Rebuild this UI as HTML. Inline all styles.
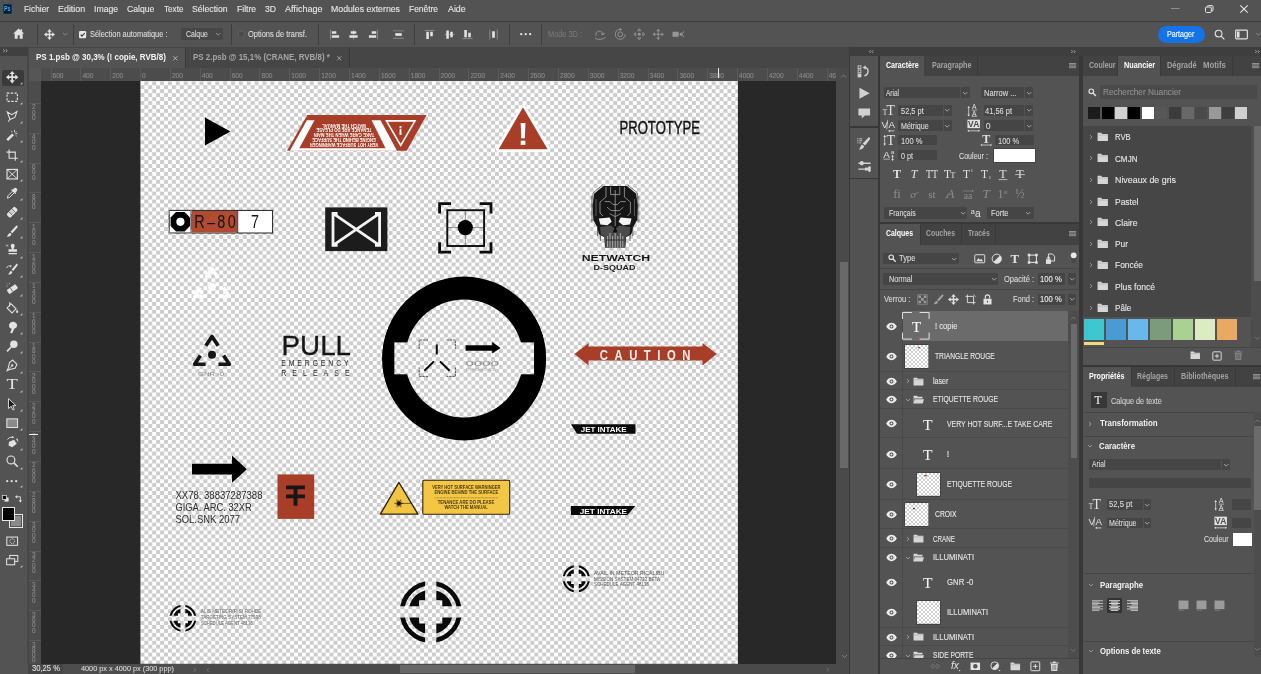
<!DOCTYPE html>
<html lang="fr"><head><meta charset="utf-8"><title>Photoshop</title><style>
html,body{margin:0;padding:0;}
body{width:1261px;height:674px;overflow:hidden;background:#535353;position:relative;will-change:transform;font-family:"Liberation Sans",sans-serif;color:#ddd;}
.panel,.b,.t,.i{position:absolute;}
.panel{overflow:hidden;}
.t{white-space:nowrap;line-height:1;transform-origin:0 0;-webkit-text-stroke:0.1px currentColor;}
svg{display:block;overflow:visible;}
</style></head><body>
<div id="menubar" class="panel" style="left:0px;top:0px;width:1261px;height:21px;background:#535353;">
<div class="b" style="left:2.5px;top:4.3px;width:9.8px;height:9.3px;background:#001e36;border-radius:2px;box-shadow:inset 0 0 0 0.6px #0d4a78;"></div>
<span class="t" style="left:4.2px;top:5.97px;font-size:6.6px;color:#3fb0ff;font-weight:bold;-webkit-text-stroke:0;transform:scaleX(0.8170);">Ps</span>
<span class="t" style="left:23.6px;top:5.49px;font-size:9.2px;color:#e8e8e8;transform:scaleX(0.9101);">Fichier</span>
<span class="t" style="left:57.6px;top:5.49px;font-size:9.2px;color:#e8e8e8;transform:scaleX(0.9682);">Edition</span>
<span class="t" style="left:93.9px;top:5.49px;font-size:9.2px;color:#e8e8e8;transform:scaleX(0.9434);">Image</span>
<span class="t" style="left:127px;top:5.49px;font-size:9.2px;color:#e8e8e8;transform:scaleX(0.9373);">Calque</span>
<span class="t" style="left:163.7px;top:5.49px;font-size:9.2px;color:#e8e8e8;transform:scaleX(0.8876);">Texte</span>
<span class="t" style="left:192px;top:5.49px;font-size:9.2px;color:#e8e8e8;transform:scaleX(0.9445);">Sélection</span>
<span class="t" style="left:236.5px;top:5.49px;font-size:9.2px;color:#e8e8e8;transform:scaleX(0.9353);">Filtre</span>
<span class="t" style="left:264.5px;top:5.49px;font-size:9.2px;color:#e8e8e8;transform:scaleX(0.9447);">3D</span>
<span class="t" style="left:284.5px;top:5.49px;font-size:9.2px;color:#e8e8e8;transform:scaleX(0.9832);">Affichage</span>
<span class="t" style="left:330.8px;top:5.49px;font-size:9.2px;color:#e8e8e8;transform:scaleX(0.9513);">Modules externes</span>
<span class="t" style="left:409px;top:5.49px;font-size:9.2px;color:#e8e8e8;transform:scaleX(0.9156);">Fenêtre</span>
<span class="t" style="left:447.6px;top:5.49px;font-size:9.2px;color:#e8e8e8;transform:scaleX(0.9624);">Aide</span>
<svg class="i" style="left:1171px;top:7.5px;" width="8.5" height="1" viewBox="0 0 8.5 1"><rect width="8.5" height="1" fill="#8e8e8e"/></svg>
<svg class="i" style="left:1204.5px;top:4.5px;" width="8.5" height="8" viewBox="0 0 8.5 8"><rect x="0.5" y="2" width="5.8" height="5.5" rx="1" fill="none" stroke="#e6e6e6" stroke-width="1"/><path d="M2.3 2V1.6a1 1 0 0 1 1-1H7a1 1 0 0 1 1 1V5a1 1 0 0 1-1 1H6.4" fill="none" stroke="#e6e6e6" stroke-width="1"/></svg>
<svg class="i" style="left:1240px;top:4.5px;" width="8" height="8" viewBox="0 0 8 8"><path d="M0.3 0.3L7.7 7.7M7.7 0.3L0.3 7.7" stroke="#e6e6e6" stroke-width="1.1"/></svg>
</div>
<div class="b" style="left:0px;top:20.8px;width:1261px;height:1.2px;background:#3c3c3c;"></div>
<div id="optionsbar" class="panel" style="left:0px;top:22px;width:1261px;height:24.5px;background:#535353;">
<svg class="i" style="left:12.7px;top:6.3px;" width="11.4" height="11.4" viewBox="0 0 12 12"><path d="M6 0.6L0.2 5.9H1.8V11.2H4.9V7.6H7.1V11.2H10.2V5.9H11.8L9.6 3.9V1.4H8.2V2.6Z" fill="#e2e2e2" /></svg>
<div class="b" style="left:37px;top:2px;width:0.8px;height:21px;background:#3e3e3e;"></div>
<svg class="i" style="left:43.5px;top:6.5px;" width="11" height="11" viewBox="0 0 12 12"><path d="M6 0L8.5 3H6.8V5.2H9V3.5L12 6L9 8.5V6.8H6.8V9H8.5L6 12L3.5 9H5.2V6.8H3V8.5L0 6L3 3.5V5.2H5.2V3H3.5Z" fill="#e2e2e2" /></svg>
<svg class="i" style="left:62.8px;top:11.2px;" width="4.4" height="2.2" viewBox="0 0 4.4 2.2"><path d="M0 0 L2.2 2.2 L4.4 0" fill="none" stroke="#888" stroke-width="0.9"/></svg>
<div class="b" style="left:72.8px;top:2px;width:0.8px;height:21px;background:#3e3e3e;"></div>
<svg class="i" style="left:79px;top:8.7px;" width="7.2" height="7.2" viewBox="0 0 7.2 7.2"><rect width="7.2" height="7.2" rx="1.2" fill="#e8e8e8"/><path d="M1.6 3.7L3 5.2L5.7 2" fill="none" stroke="#333" stroke-width="1.1"/></svg>
<span class="t" style="left:90px;top:8.09px;font-size:8.6px;color:#dcdcdc;transform:scaleX(0.8628);">Sélection automatique :</span>
<div class="b" style="left:180.7px;top:6.4px;width:42.3px;height:11.6px;background:#474747;border-radius:1px;"></div>
<span class="t" style="left:185.8px;top:8.09px;font-size:8.6px;color:#dcdcdc;transform:scaleX(0.8005);">Calque</span>
<svg class="i" style="left:215.8px;top:11.4px;" width="4.4" height="2.2" viewBox="0 0 4.4 2.2"><path d="M0 0 L2.2 2.2 L4.4 0" fill="none" stroke="#999" stroke-width="0.9"/></svg>
<div class="b" style="left:231px;top:2px;width:0.8px;height:21px;background:#3e3e3e;"></div>
<svg class="i" style="left:238px;top:9px;" width="6.4" height="6.4" viewBox="0 0 6.4 6.4"><rect x="0.3" y="0.3" width="5.8" height="5.8" rx="1" fill="#4a4a4a" stroke="#6a6a6a" stroke-width="0.6"/></svg>
<span class="t" style="left:248px;top:8.09px;font-size:8.6px;color:#dcdcdc;transform:scaleX(0.8696);">Options de transf.</span>
<div class="b" style="left:317.5px;top:2px;width:0.8px;height:21px;background:#3e3e3e;"></div>
<svg class="i" style="left:329px;top:6.5px;" width="11" height="11" viewBox="0 0 12 12"><path d="M1 0.5H2V11.5H1Z" fill="#8c8c8c" /><path d="M3 2.5H8V5.3H3Z M3 6.8H11V9.6H3Z" fill="#e2e2e2" /></svg>
<svg class="i" style="left:347.8px;top:6.5px;" width="11" height="11" viewBox="0 0 12 12"><path d="M5.5 0.5H6.5V11.5H5.5Z" fill="#8c8c8c" /><path d="M3 2.5H9V5.3H3Z M1.5 6.8H10.5V9.6H1.5Z" fill="#e2e2e2" /></svg>
<svg class="i" style="left:367.5px;top:6.5px;" width="11" height="11" viewBox="0 0 12 12"><path d="M10 0.5H11V11.5H10Z" fill="#8c8c8c" /><path d="M4 2.5H9V5.3H4Z M1 6.8H9V9.6H1Z" fill="#e2e2e2" /></svg>
<svg class="i" style="left:392.5px;top:6.5px;" width="11" height="11" viewBox="0 0 12 12"><path d="M0 1.5H12V2.5H0Z M0 9.5H12V10.5H0Z" fill="#8c8c8c" /><path d="M2.5 4.5H9.5V7.5H2.5Z" fill="#e2e2e2" /></svg>
<div class="b" style="left:414px;top:2px;width:0.8px;height:21px;background:#3e3e3e;"></div>
<svg class="i" style="left:424px;top:6.5px;" width="11" height="11" viewBox="0 0 12 12"><path d="M0.5 1H11.5V2H0.5Z" fill="#8c8c8c" /><path d="M2.5 3H5.3V11H2.5Z M6.8 3H9.6V8H6.8Z" fill="#e2e2e2" /></svg>
<svg class="i" style="left:443.5px;top:6.5px;" width="11" height="11" viewBox="0 0 12 12"><path d="M0.5 5.5H11.5V6.5H0.5Z" fill="#8c8c8c" /><path d="M2.5 1.5H5.3V10.5H2.5Z M6.8 3H9.6V9H6.8Z" fill="#e2e2e2" /></svg>
<svg class="i" style="left:462.2px;top:6.5px;" width="11" height="11" viewBox="0 0 12 12"><path d="M0.5 10H11.5V11H0.5Z" fill="#8c8c8c" /><path d="M2.5 1H5.3V9H2.5Z M6.8 4H9.6V9H6.8Z" fill="#e2e2e2" /></svg>
<svg class="i" style="left:488px;top:6.5px;" width="11" height="11" viewBox="0 0 12 12"><path d="M1.5 0.5H2.5V11.5H1.5Z M9.5 0.5H10.5V11.5H9.5Z" fill="#8c8c8c" /><path d="M4.5 2.5H7.5V9.5H4.5Z" fill="#e2e2e2" /></svg>
<div class="b" style="left:509px;top:2px;width:0.8px;height:21px;background:#3e3e3e;"></div>
<svg class="i" style="left:519.6px;top:11px;" width="11.4" height="2.4" viewBox="0 0 11.4 2.4"><circle cx="1.2" cy="1.2" r="1.15" fill="#e6e6e6"/><circle cx="5.7" cy="1.2" r="1.15" fill="#e6e6e6"/><circle cx="10.2" cy="1.2" r="1.15" fill="#e6e6e6"/></svg>
<div class="b" style="left:541px;top:2px;width:0.8px;height:21px;background:#3e3e3e;"></div>
<span class="t" style="left:548px;top:8.09px;font-size:8.6px;color:#787878;transform:scaleX(0.8574);">Mode 3D :</span>
<svg class="i" style="left:594.45px;top:5.75px;" width="12.5" height="12.5" viewBox="0 0 12 12"><path d="M2 7.5A3.4 3.4 0 1 1 8.6 6.4M8.6 6.4L10.4 4.8M8.6 6.4L6.6 5.6" fill="none" stroke="#979797" stroke-width="0.9" /><path d="M1 9.5C3 11.5 9 11.5 11 8.5" fill="none" stroke="#979797" stroke-width="0.9" /></svg>
<svg class="i" style="left:614.25px;top:5.75px;" width="12.5" height="12.5" viewBox="0 0 12 12"><path d="M6 1.2A4.8 4.8 0 1 0 10.8 6" fill="none" stroke="#979797" stroke-width="0.9" /><circle cx="6" cy="6" r="2.3" fill="none" stroke="#979797" stroke-width="0.9"/><path d="M5.6 0L8 1.3L5.6 2.6Z" fill="#979797" /></svg>
<svg class="i" style="left:633.45px;top:5.75px;" width="12.5" height="12.5" viewBox="0 0 12 12"><path d="M6 0.6L7.6 2.6H4.4ZM6 11.4L4.4 9.4H7.6ZM0.6 6L2.6 4.4V7.6ZM11.4 6L9.4 7.6V4.4Z" fill="none" stroke="#979797" stroke-width="0.8" /><circle cx="6" cy="6" r="1.4" fill="#979797"/></svg>
<svg class="i" style="left:652.25px;top:5.75px;" width="12.5" height="12.5" viewBox="0 0 12 12"><path d="M6 0.6L7.8 3H4.2ZM6 11.4L4.2 9H7.8ZM0.6 6L3 4.2V7.8ZM11.4 6L9 7.8V4.2Z" fill="#979797" /><path d="M5.2 5.2H6.8V6.8H5.2Z" fill="#979797" /><path d="M3 6H9M6 3V9" fill="none" stroke="#979797" stroke-width="0.7" /></svg>
<svg class="i" style="left:671.75px;top:5.75px;" width="12.5" height="12.5" viewBox="0 0 12 12"><path d="M0.5 3.6H6.4V8.4H0.5Z" fill="#979797" /><path d="M6.8 6L9.4 3.8V8.2Z" fill="#979797" /><path d="M11.4 3L9.8 6L11.4 9" fill="none" stroke="#979797" stroke-width="0.8" /></svg>
<div class="b" style="left:1157.7px;top:3.5px;width:47.6px;height:17.3px;background:#1473e6;border-radius:9px;"></div>
<span class="t" style="left:1166.6px;top:7.99px;font-size:8.6px;color:#fff;transform:scaleX(0.8311);">Partager</span>
<svg class="i" style="left:1214.2px;top:7.2px;" width="11" height="11" viewBox="0 0 12 12"><circle cx="5" cy="5" r="3.7" fill="none" stroke="#e2e2e2" stroke-width="1.2"/><path d="M7.8 7.8L11.3 11.3" fill="none" stroke="#e2e2e2" stroke-width="1.4" /></svg>
<svg class="i" style="left:1235.2px;top:6.2px;" width="13" height="13" viewBox="0 0 12 12"><rect x="0.6" y="2" width="10.8" height="8" rx="0.8" fill="none" stroke="#e2e2e2" stroke-width="1.1"/><path d="M1.8 3.2H4.2V8.8H1.8Z" fill="#e2e2e2" /></svg>
<svg class="i" style="left:1255.6px;top:11.4px;" width="4.4" height="2.2" viewBox="0 0 4.4 2.2"><path d="M0 0 L2.2 2.2 L4.4 0" fill="none" stroke="#888" stroke-width="0.9"/></svg>
</div>
<div id="doctabs" class="panel" style="left:0px;top:46.5px;width:850px;height:21.5px;background:#464646;">
<div class="b" style="left:0px;top:0px;width:28px;height:9.4px;background:#404040;"></div>
<div class="b" style="left:0px;top:9.4px;width:28px;height:12.1px;background:#535353;"></div>
<div class="b" style="left:26.8px;top:9.4px;width:2.4px;height:12.1px;background:#474747;"></div>
<svg class="i" style="left:2.6px;top:2.7px;" width="5" height="3.4" viewBox="0 0 5 3.4"><path d="M0.3 0.3L1.8 1.7L0.3 3.1M2.8 0.3L4.3 1.7L2.8 3.1" fill="none" stroke="#ccc" stroke-width="0.7"/></svg>
<div class="b" style="left:29px;top:1.1px;width:155.8px;height:20.4px;background:#535353;"></div>
<span class="t" style="left:36.3px;top:6.74px;font-size:8.9px;color:#f4f4f4;font-weight:bold;-webkit-text-stroke:0;transform:scaleX(0.9013);">PS 1.psb @ 30,3% (! copie, RVB/8)</span>
<svg class="i" style="left:172.7px;top:9.3px;" width="4.6" height="4.6" viewBox="0 0 4.6 4.6"><path d="M0.3 0.3L4.3 4.3M4.3 0.3L0.3 4.3" stroke="#c8c8c8" stroke-width="0.8"/></svg>
<div class="b" style="left:184.8px;top:0.5px;width:0.8px;height:21px;background:#383838;"></div>
<span class="t" style="left:193.4px;top:6.74px;font-size:8.9px;color:#a6a6a6;font-weight:bold;-webkit-text-stroke:0;transform:scaleX(0.8948);">PS 2.psb @ 15,1% (CRANE, RVB/8) *</span>
<svg class="i" style="left:336.8px;top:9.3px;" width="4.6" height="4.6" viewBox="0 0 4.6 4.6"><path d="M0.3 0.3L4.3 4.3M4.3 0.3L0.3 4.3" stroke="#bdbdbd" stroke-width="0.8"/></svg>
<div class="b" style="left:349.3px;top:0.5px;width:0.8px;height:21px;background:#383838;"></div>
</div>
<div id="toolbar" class="panel" style="left:0px;top:68px;width:29.2px;height:596px;background:#535353;">
<div class="b" style="left:26.8px;top:0px;width:2.4px;height:596px;background:#474747;"></div>
<div class="b" style="left:2px;top:1.5px;width:21.7px;height:16.2px;background:#3a3a3a;border-radius:2px;"></div>
<svg class="i" style="left:5.9px;top:2.6px;" width="12.4" height="12.4" viewBox="0 0 12 12"><path d="M6 0L8.5 3H6.8V5.2H9V3.5L12 6L9 8.5V6.8H6.8V9H8.5L6 12L3.5 9H5.2V6.8H3V8.5L0 6L3 3.5V5.2H5.2V3H3.5Z" fill="#e2e2e2" /></svg>
<svg class="i" style="left:20.2px;top:14px;" width="2.4" height="2.4" viewBox="0 0 2.4 2.4"><path d="M2.4 0V2.4H0Z" fill="#bdbdbd"/></svg>
<svg class="i" style="left:5.9px;top:22.6px;" width="12.4" height="12.4" viewBox="0 0 12 12"><rect x="1" y="2" width="10" height="8" fill="none" stroke="#e2e2e2" stroke-width="1.1" stroke-dasharray="2.2 1.4"/></svg>
<svg class="i" style="left:20.2px;top:34px;" width="2.4" height="2.4" viewBox="0 0 2.4 2.4"><path d="M2.4 0V2.4H0Z" fill="#bdbdbd"/></svg>
<svg class="i" style="left:5.9px;top:41.8px;" width="12.4" height="12.4" viewBox="0 0 12 12"><path d="M1.2 1.8L5.6 4.6L10.6 1.4L8.6 7.2L3.8 9.2ZM3.8 9.2L2 11.4" fill="none" stroke="#e2e2e2" stroke-width="1" /></svg>
<svg class="i" style="left:20.2px;top:53.2px;" width="2.4" height="2.4" viewBox="0 0 2.4 2.4"><path d="M2.4 0V2.4H0Z" fill="#bdbdbd"/></svg>
<svg class="i" style="left:5.9px;top:60.8px;" width="12.4" height="12.4" viewBox="0 0 12 12"><path d="M1.2 10.8L6.8 5.2" fill="none" stroke="#e2e2e2" stroke-width="2.5" /><path d="M8.2 0.8V3M10 2.4L8.8 3.6M11.2 4.4H9.2M5 1.8L6.2 3M10.4 7L9.2 5.8" fill="none" stroke="#e2e2e2" stroke-width="0.8" /></svg>
<svg class="i" style="left:20.2px;top:72.2px;" width="2.4" height="2.4" viewBox="0 0 2.4 2.4"><path d="M2.4 0V2.4H0Z" fill="#bdbdbd"/></svg>
<svg class="i" style="left:5.9px;top:80.5px;" width="12.4" height="12.4" viewBox="0 0 12 12"><path d="M3 0.5V9H11.5M0.5 3H9V11.5" fill="none" stroke="#e2e2e2" stroke-width="1.05" /></svg>
<svg class="i" style="left:20.2px;top:91.9px;" width="2.4" height="2.4" viewBox="0 0 2.4 2.4"><path d="M2.4 0V2.4H0Z" fill="#bdbdbd"/></svg>
<svg class="i" style="left:5.9px;top:99.6px;" width="12.4" height="12.4" viewBox="0 0 12 12"><rect x="1" y="1.4" width="10" height="9.2" fill="none" stroke="#e2e2e2" stroke-width="1.1"/><path d="M1 1.4L11 10.6M11 1.4L1 10.6" fill="none" stroke="#e2e2e2" stroke-width="0.9" /></svg>
<svg class="i" style="left:20.2px;top:111px;" width="2.4" height="2.4" viewBox="0 0 2.4 2.4"><path d="M2.4 0V2.4H0Z" fill="#bdbdbd"/></svg>
<svg class="i" style="left:5.9px;top:118.8px;" width="12.4" height="12.4" viewBox="0 0 12 12"><path d="M1.2 10.8L2 8.4L6.6 3.8L8.2 5.4L3.6 10Z" fill="none" stroke="#e2e2e2" stroke-width="0.9" /><path d="M6.4 2.6L7.6 1.4A1.7 1.7 0 0 1 10.4 4.2L9.2 5.4L9.8 6L9 6.8L5 2.8L5.8 2Z" fill="#e2e2e2" /></svg>
<svg class="i" style="left:20.2px;top:130.2px;" width="2.4" height="2.4" viewBox="0 0 2.4 2.4"><path d="M2.4 0V2.4H0Z" fill="#bdbdbd"/></svg>
<svg class="i" style="left:5.9px;top:137.8px;" width="12.4" height="12.4" viewBox="0 0 12 12"><g transform="rotate(-45 6 6)"><rect x="0.4" y="3.4" width="11.2" height="5.2" rx="1.6" fill="#e2e2e2"/><path d="M4 3.4V8.6M8 3.4V8.6" stroke="#535353" stroke-width="0.7"/><path d="M5.2 5.2H5.21M6.8 5.2H6.81M5.2 6.8H5.21M6.8 6.8H6.81" stroke="#535353" stroke-width="0.8" stroke-linecap="round"/></g></svg>
<svg class="i" style="left:20.2px;top:149.2px;" width="2.4" height="2.4" viewBox="0 0 2.4 2.4"><path d="M2.4 0V2.4H0Z" fill="#bdbdbd"/></svg>
<svg class="i" style="left:5.9px;top:156.8px;" width="12.4" height="12.4" viewBox="0 0 12 12"><path d="M10.8 0.6C11.6 1.2 11.4 1.8 11 2.4L6.2 8L4.4 6.6L9.6 1C10 0.6 10.4 0.4 10.8 0.6ZM3.8 7.4L5.4 8.8C5 10.6 3 11.6 0.6 11.2C2 10.4 2 8.4 3.8 7.4Z" fill="#e2e2e2" /></svg>
<svg class="i" style="left:20.2px;top:168.2px;" width="2.4" height="2.4" viewBox="0 0 2.4 2.4"><path d="M2.4 0V2.4H0Z" fill="#bdbdbd"/></svg>
<svg class="i" style="left:5.9px;top:176.1px;" width="12.4" height="12.4" viewBox="0 0 12 12"><path d="M4.6 1.6A1.9 1.9 0 0 1 8.4 1.6C8.4 3 7.4 3.4 7.4 5H10.6V7.6H2.4V5H5.6C5.6 3.4 4.6 3 4.6 1.6ZM2.4 8.6H10.6V10H2.4Z" fill="#e2e2e2" /><path d="M0.2 0.6L2 2.4M2 0.6L0.2 2.4" fill="none" stroke="#e2e2e2" stroke-width="0.7" /></svg>
<svg class="i" style="left:20.2px;top:187.5px;" width="2.4" height="2.4" viewBox="0 0 2.4 2.4"><path d="M2.4 0V2.4H0Z" fill="#bdbdbd"/></svg>
<svg class="i" style="left:5.9px;top:195.2px;" width="12.4" height="12.4" viewBox="0 0 12 12"><path d="M11 1C11.6 1.6 11.4 2.2 11 2.6L7 7.8L5.4 6.6L9.8 1.2C10.2 0.8 10.6 0.6 11 1ZM4.8 7.4L6.2 8.6C5.8 10.4 4 11.4 1.8 11C3.2 10.2 3.2 8.4 4.8 7.4Z" fill="#e2e2e2" /><path d="M0.6 5A2.6 2.6 0 0 1 4.6 3.2" fill="none" stroke="#e2e2e2" stroke-width="0.8" /><path d="M5.4 2L5 4.4L3.2 3Z" fill="#e2e2e2" /></svg>
<svg class="i" style="left:20.2px;top:206.6px;" width="2.4" height="2.4" viewBox="0 0 2.4 2.4"><path d="M2.4 0V2.4H0Z" fill="#bdbdbd"/></svg>
<svg class="i" style="left:5.9px;top:214.3px;" width="12.4" height="12.4" viewBox="0 0 12 12"><g transform="rotate(-35 6 7)"><rect x="1" y="4.6" width="10.4" height="4.8" rx="0.8" fill="#e2e2e2"/><path d="M5.2 4.6V9.4" stroke="#535353" stroke-width="0.7"/></g><path d="M1 1.6L1.8 2.4M3.4 0.8V1.8M0.4 4H1.4" fill="none" stroke="#e2e2e2" stroke-width="0.7" /></svg>
<svg class="i" style="left:20.2px;top:225.7px;" width="2.4" height="2.4" viewBox="0 0 2.4 2.4"><path d="M2.4 0V2.4H0Z" fill="#bdbdbd"/></svg>
<svg class="i" style="left:5.9px;top:233.8px;" width="12.4" height="12.4" viewBox="0 0 12 12"><path d="M5 1.8L9.8 6.6L5.8 10.6L1 5.8Z" fill="none" stroke="#e2e2e2" stroke-width="1" /><path d="M5 1.8L3.4 0.4V4.4" fill="none" stroke="#e2e2e2" stroke-width="0.8" /><path d="M10.8 7.2C11.6 8.4 11.8 9 11.8 9.6A1 1 0 0 1 9.8 9.6C9.8 9 10 8.4 10.8 7.2Z" fill="#e2e2e2" /></svg>
<svg class="i" style="left:20.2px;top:245.2px;" width="2.4" height="2.4" viewBox="0 0 2.4 2.4"><path d="M2.4 0V2.4H0Z" fill="#bdbdbd"/></svg>
<svg class="i" style="left:5.9px;top:252.8px;" width="12.4" height="12.4" viewBox="0 0 12 12"><path d="M4 11.6L5.6 7.6C3.4 7 2.4 5.4 3 3.6C3.6 1.6 5.8 0.4 8 1C10.2 1.6 11.2 3.4 10.6 5.2C10.2 6.6 9 7.4 8 7.4L6 11.8Z" fill="#e2e2e2" /></svg>
<svg class="i" style="left:20.2px;top:264.2px;" width="2.4" height="2.4" viewBox="0 0 2.4 2.4"><path d="M2.4 0V2.4H0Z" fill="#bdbdbd"/></svg>
<svg class="i" style="left:5.9px;top:272px;" width="12.4" height="12.4" viewBox="0 0 12 12"><circle cx="7.6" cy="4.2" r="3.6" fill="#e2e2e2"/><path d="M5 6.8L1 11" fill="none" stroke="#e2e2e2" stroke-width="1.6" /></svg>
<svg class="i" style="left:20.2px;top:283.4px;" width="2.4" height="2.4" viewBox="0 0 2.4 2.4"><path d="M2.4 0V2.4H0Z" fill="#bdbdbd"/></svg>
<svg class="i" style="left:5.9px;top:291.1px;" width="12.4" height="12.4" viewBox="0 0 12 12"><path d="M6.6 1L10.6 5.2L8.8 9L3.6 10.2L1 11.4L2.2 8.6L3.4 3.4Z" fill="none" stroke="#e2e2e2" stroke-width="1" /><path d="M1.4 11L5.4 6.8" fill="none" stroke="#e2e2e2" stroke-width="0.8" /><circle cx="6" cy="6.2" r="1.1" fill="#e2e2e2"/></svg>
<svg class="i" style="left:20.2px;top:302.5px;" width="2.4" height="2.4" viewBox="0 0 2.4 2.4"><path d="M2.4 0V2.4H0Z" fill="#bdbdbd"/></svg>
<svg class="i" style="left:5.9px;top:310.2px;" width="12.4" height="12.4" viewBox="0 0 12 12"><text x="6" y="10.8" font-size="14" fill="#e2e2e2" font-family="Liberation Serif,serif" text-anchor="middle" textLength="11" lengthAdjust="spacingAndGlyphs">T</text></svg>
<svg class="i" style="left:20.2px;top:321.6px;" width="2.4" height="2.4" viewBox="0 0 2.4 2.4"><path d="M2.4 0V2.4H0Z" fill="#bdbdbd"/></svg>
<svg class="i" style="left:5.9px;top:329.8px;" width="12.4" height="12.4" viewBox="0 0 12 12"><path d="M2.4 0.6L9.6 7.4H6.4L8 11L6.6 11.6L5 8L2.4 10.2Z" fill="#1a1a1a" /><path d="M2.4 0.6L9.6 7.4H6.4L8 11L6.6 11.6L5 8L2.4 10.2Z" fill="none" stroke="#e2e2e2" stroke-width="0.9" /></svg>
<svg class="i" style="left:20.2px;top:341.2px;" width="2.4" height="2.4" viewBox="0 0 2.4 2.4"><path d="M2.4 0V2.4H0Z" fill="#bdbdbd"/></svg>
<svg class="i" style="left:5.9px;top:348.8px;" width="12.4" height="12.4" viewBox="0 0 12 12"><rect x="0.8" y="1.8" width="10.4" height="8.4" fill="#8a8a8a" stroke="#e2e2e2" stroke-width="1"/></svg>
<svg class="i" style="left:20.2px;top:360.2px;" width="2.4" height="2.4" viewBox="0 0 2.4 2.4"><path d="M2.4 0V2.4H0Z" fill="#bdbdbd"/></svg>
<svg class="i" style="left:5.9px;top:368.1px;" width="12.4" height="12.4" viewBox="0 0 12 12"><path d="M3 5.6L7.8 3.6L10.4 7.4L6 10.8L2.4 9.2Z" fill="#e2e2e2" /><path d="M1.4 3.4A5.4 5.4 0 0 1 6.4 1M10.6 3A5 5 0 0 1 11.4 5.4" fill="none" stroke="#e2e2e2" stroke-width="0.9" /><path d="M6 0L8 1.2L6 2.4Z M10 2.4L11.8 3L10.6 4.4Z" fill="#e2e2e2" /></svg>
<svg class="i" style="left:20.2px;top:379.5px;" width="2.4" height="2.4" viewBox="0 0 2.4 2.4"><path d="M2.4 0V2.4H0Z" fill="#bdbdbd"/></svg>
<svg class="i" style="left:5.9px;top:387.4px;" width="12.4" height="12.4" viewBox="0 0 12 12"><circle cx="4.8" cy="4.8" r="3.8" fill="none" stroke="#e2e2e2" stroke-width="1.1"/><path d="M7.6 7.6L11.4 11.4" fill="none" stroke="#e2e2e2" stroke-width="1.5" /></svg>
<svg class="i" style="left:20.2px;top:398.8px;" width="2.4" height="2.4" viewBox="0 0 2.4 2.4"><path d="M2.4 0V2.4H0Z" fill="#bdbdbd"/></svg>
<svg class="i" style="left:6px;top:412px;" width="11.4" height="2.4" viewBox="0 0 11.4 2.4"><circle cx="1.2" cy="1.2" r="1.15" fill="#ddd"/><circle cx="5.7" cy="1.2" r="1.15" fill="#ddd"/><circle cx="10.2" cy="1.2" r="1.15" fill="#ddd"/></svg>
<svg class="i" style="left:20.2px;top:417px;" width="2.4" height="2.4" viewBox="0 0 2.4 2.4"><path d="M2.4 0V2.4H0Z" fill="#bdbdbd"/></svg>
<svg class="i" style="left:1.8px;top:427px;" width="7" height="7" viewBox="0 0 7 7"><rect x="2.6" y="2.6" width="4" height="4" fill="#e6e6e6"/><rect x="0.4" y="0.4" width="4" height="4" fill="#111" stroke="#e6e6e6" stroke-width="0.7"/></svg>
<svg class="i" style="left:14.5px;top:426.6px;" width="7.4" height="7.4" viewBox="0 0 7.4 7.4"><path d="M1.8 1.8H5.4V5.6" fill="none" stroke="#e0e0e0" stroke-width="0.9"/><path d="M0 1.8L2.2 0V3.6Z M5.4 7.4L3.6 5.2H7.2Z" fill="#e0e0e0"/></svg>
<div class="b" style="left:9.3px;top:446.2px;width:14.1px;height:14.1px;background:#8a8a8a;box-shadow:inset 0 0 0 1px #e8e8e8, inset 0 0 0 1.8px #444;"></div>
<div class="b" style="left:1.6px;top:439px;width:13.2px;height:13.5px;background:#050505;box-shadow:inset 0 0 0 1px #e8e8e8, inset 0 0 0 1.7px #000;"></div>
<svg class="i" style="left:5.6px;top:466.8px;" width="12.4" height="12.4" viewBox="0 0 12 12"><rect x="0.8" y="2" width="10.4" height="8" fill="none" stroke="#e2e2e2" stroke-width="1"/><circle cx="6" cy="6" r="2.3" fill="none" stroke="#e2e2e2" stroke-width="0.9" stroke-dasharray="1 0.6"/></svg>
<svg class="i" style="left:5.6px;top:485.8px;" width="12.4" height="12.4" viewBox="0 0 12 12"><rect x="3.6" y="1.4" width="7.8" height="5.8" fill="none" stroke="#e2e2e2" stroke-width="1"/><rect x="0.6" y="4.6" width="7.8" height="5.8" fill="#535353" stroke="#e2e2e2" stroke-width="1"/></svg>
<svg class="i" style="left:20.2px;top:497.4px;" width="2.4" height="2.4" viewBox="0 0 2.4 2.4"><path d="M2.4 0V2.4H0Z" fill="#bdbdbd"/></svg>
</div>
<div id="canvas" class="panel" style="left:41px;top:81px;width:795px;height:583px;background:#282828;">
<svg class="i" style="left:0;top:0" width="797" height="583" viewBox="41 81 797 583">
<defs><pattern id="chk" x="140.4" y="81.3" width="7.88" height="7.88" patternUnits="userSpaceOnUse"><rect width="7.88" height="7.88" fill="#fff"/><rect x="3.94" width="3.94" height="3.94" fill="#ccc"/><rect y="3.94" width="3.94" height="3.94" fill="#ccc"/></pattern></defs>
<rect x="140.4" y="81" width="597.5" height="582.8" fill="url(#chk)"/>
<path d="M205 117.4V145.5L230.4 131.5Z" fill="#000"/>
<path d="M307.3 115H426.6L406.8 150.8H287Z" fill="#a83d28"/>
<path d="M306.9 120.3H314.5L299.3 148.2H385.6L371.6 120.3H380.5L397 150.8H289.9Z" fill="#fff"/>
<path d="M386.4 120.9H415L400.7 145.4Z" fill="none" stroke="#fff" stroke-width="1.6"/>
<g transform="rotate(180 344 134.4)" fill="#fff">
<text x="322.1" y="145.3" font-size="5.3" fill="#fff" font-family="Liberation Sans,sans-serif" text-anchor="start" font-weight="bold" textLength="43.8" lengthAdjust="spacingAndGlyphs" >WATCH THE MANUAL</text>
<text x="316.4" y="140.6" font-size="5.3" fill="#fff" font-family="Liberation Sans,sans-serif" text-anchor="start" font-weight="bold" textLength="55.2" lengthAdjust="spacingAndGlyphs" >TENANCE ARE DO PLEASE</text>
<text x="313.65" y="135.7" font-size="5.3" fill="#fff" font-family="Liberation Sans,sans-serif" text-anchor="start" font-weight="bold" textLength="60.7" lengthAdjust="spacingAndGlyphs" >TAKE CARE WHEN THE MAIN</text>
<text x="312.25" y="130.9" font-size="5.3" fill="#fff" font-family="Liberation Sans,sans-serif" text-anchor="start" font-weight="bold" textLength="63.5" lengthAdjust="spacingAndGlyphs" >ENGINE BEHIND THE SURFACE</text>
<text x="309.75" y="125.8" font-size="5.3" fill="#fff" font-family="Liberation Sans,sans-serif" text-anchor="start" font-weight="bold" textLength="68.5" lengthAdjust="spacingAndGlyphs" >VERY HOT SURFACE WARNINGER</text>
</g>
<g transform="rotate(180 400.6 130.6)"><text x="400.6" y="135.6" font-size="13.5" fill="#fff" font-family="Liberation Sans,sans-serif" text-anchor="middle" font-weight="bold" >!</text></g>
<path d="M523 107.3L547.6 149.2H498.7Z" fill="#a83d28" stroke="#fff" stroke-width="5.4" stroke-linejoin="round"/>
<path d="M523 107.3L547.6 149.2H498.7Z" fill="#a83d28"/>
<text x="523.2" y="144.6" font-size="32" fill="#fff" font-family="Liberation Sans,sans-serif" text-anchor="middle" font-weight="bold" >!</text>
<text x="619.5" y="134.2" font-size="18.7" fill="#141414" font-family="Liberation Sans,sans-serif" text-anchor="start" textLength="80.5" lengthAdjust="spacingAndGlyphs" stroke="#141414" stroke-width="0.45">PROTOTYPE</text>
<rect x="169.2" y="210.4" width="103.4" height="22.6" fill="#fff" stroke="#1c1c1c" stroke-width="1"/>
<rect x="191.4" y="211" width="45.8" height="21.4" fill="#b04a30"/>
<path d="M237.7 210.4V233M191 210.4V233" stroke="#1c1c1c" stroke-width="0.9"/>
<path d="M176 212H184.6L190 217.4V226L184.6 231.5H176L170.6 226V217.4Z" fill="#000"/><circle cx="180.4" cy="221.8" r="4.1" fill="#fff"/>
<path d="M169 214V209.6H174M186 209.6H191V214M191 229.4V233.8H186M174 233.8H169V229.4" fill="none" stroke="#bdbdbd" stroke-width="0.8"/>
<g transform="translate(194.3 0) scale(0.78 1)"><text x="0" y="228.3" font-size="18.6" fill="#141414" font-family="Liberation Sans,sans-serif" text-anchor="start" textLength="53.1" lengthAdjust="spacing" >R–80</text></g>
<text x="251" y="228.3" font-size="18.6" fill="#141414" font-family="Liberation Sans,sans-serif" text-anchor="start" textLength="8" lengthAdjust="spacingAndGlyphs" >7</text>
<rect x="325.2" y="207.4" width="62.2" height="43.7" fill="#1c1c1c"/>
<path d="M337.6 213.4H333V245.4H337.6M375 213.4H379.6V245.4H375M333 213.4L379.6 245.4M379.6 213.4L333 245.4" fill="none" stroke="#f4f4f4" stroke-width="2.8"/>
<path d="M439.6 213.6V203.6H451M479.6 203.6H491V213.6M491 242.2V252.2H479.6M451 252.2H439.6V242.2" fill="none" stroke="#0c0c0c" stroke-width="2.8"/>
<rect x="447.3" y="210.2" width="36.8" height="35.8" fill="none" stroke="#0c0c0c" stroke-width="1.9"/>
<path d="M465.3 210V246.4M447 227.6H484.4" stroke="#333" stroke-width="0.5"/>
<circle cx="465.3" cy="227.6" r="7.6" fill="#000"/>
<g><path d="M603.5 186H626.9L636.2 193.7L637.8 206.2L637 220.2L633.1 227.2L631.5 234.2L626.1 237.3L625.3 247.6H605L604.3 237.3L598.8 234.2L597.3 227.2L593.4 220.2L592.6 206.2L594.1 193.7Z" fill="#161616"/><path d="M602.6 184.9L592.9 193V221M627.8 184.9L637.6 193V221" fill="none" stroke="#2a2a2a" stroke-width="0.6" transform="translate(0 0)"/><path d="M591.6 196V222M638.8 196V222" stroke="#3a3a3a" stroke-width="0.5"/><path d="M600 227L611 225.5L615.2 229L619.4 225.5L630.4 227L629.6 234L625.6 237.3L625 247.6H605.4L604.8 237.3L600.8 234Z" fill="#4c4c4c"/><path d="M598.8 218.6L609.7 217.4L611.7 221.7L607.4 225.2L600.4 224.5Z M631.5 218.6L620.6 217.4L618.6 221.7L623 225.2L630 224.5Z" fill="#f4f4f4"/><path d="M615.2 226.6L617.6 232.6H612.8Z" fill="#0c0c0c"/><path d="M615.2 190V226M606 187V197L600 202V213L603 216M624.4 187V197L630.4 202V213L627.4 216M610.6 187V194.6H619.8V187M604.6 201.6H610L613 204.6H617.4L620.4 201.6H625.8M607 207L611 210.6H619.4L623.4 207M609.6 213.6L615.2 216.6L620.8 213.6" fill="none" stroke="#b4b4b4" stroke-width="0.7"/><path d="M596 199V216M634.4 199V216" stroke="#8a8a8a" stroke-width="0.6"/><path d="M607.6 236V247M610 233V247.6M612.6 236V247.6M615.2 233V247.6M617.8 236V247.6M620.4 233V247.6M622.8 236V247" stroke="#c4c4c4" stroke-width="0.8"/><path d="M606 240H624.4" stroke="#1c1c1c" stroke-width="0.8"/><path d="M597.6 226V236M632.8 226V236M600.4 234V241M630 234V241" stroke="#3a3a3a" stroke-width="0.8"/><path d="M609 248V252.4M613.4 248V254M618.6 248V253M621.6 248V251" stroke="#d8d8d8" stroke-width="0.7"/></g>
<text x="581.7" y="261" font-size="8.3" fill="#161616" font-family="Liberation Sans,sans-serif" text-anchor="start" font-weight="bold" textLength="68.5" lengthAdjust="spacingAndGlyphs" >NETWATCH</text>
<text x="593.4" y="270" font-size="7.8" fill="#222" font-family="Liberation Sans,sans-serif" text-anchor="start" font-weight="bold" textLength="42" lengthAdjust="spacingAndGlyphs" >D-SQUAD</text>
<g fill="none" stroke="#fff" stroke-width="3.6" stroke-linejoin="round" opacity="0.92"><path d="M205.8 278.0 L212.0 268.6 L218.2 278.0"/><path d="M200.4 287.6 L194.6 296.4 L205.6 296.4"/><path d="M223.6 287.6 L229.4 296.4 L218.4 296.4"/></g><circle cx="212" cy="287.0" r="4" fill="#fff" opacity="0.92"/>
<g fill="none" stroke="#161616" stroke-width="3.6" stroke-linejoin="round" opacity="1"><path d="M205.8 345.8 L212.0 336.4 L218.2 345.8"/><path d="M200.4 355.4 L194.6 364.2 L205.6 364.2"/><path d="M223.6 355.4 L229.4 364.2 L218.4 364.2"/></g><circle cx="212" cy="354.8" r="4" fill="#161616" opacity="1"/>
<text x="198" y="375.6" font-size="6" fill="#8c8c8c" font-family="Liberation Sans,sans-serif" text-anchor="start" textLength="26" lengthAdjust="spacingAndGlyphs" >GNR -0</text>
<text x="281.6" y="354.5" font-size="27" fill="#161616" font-family="Liberation Sans,sans-serif" text-anchor="start" textLength="69.4" lengthAdjust="spacingAndGlyphs" stroke="#161616" stroke-width="0.3">PULL</text>
<g transform="translate(281.3 0) scale(0.8 1)"><text x="0" y="365.7" font-size="8.6" fill="#2e2e2e" font-family="Liberation Sans,sans-serif" text-anchor="start" textLength="84.1" lengthAdjust="spacing" >EMERGENCY</text></g>
<g transform="translate(281.3 0) scale(0.8 1)"><text x="0" y="376.5" font-size="8.8" fill="#2e2e2e" font-family="Liberation Sans,sans-serif" text-anchor="start" textLength="85.4" lengthAdjust="spacing" >RELEASE</text></g>
<path fill-rule="evenodd" fill="#000" d="M382.2 358.5A81.9 81.9 0 1 0 546 358.5A81.9 81.9 0 1 0 382.2 358.5Z M405 358.5A59.1 59.1 0 1 0 523.2 358.5A59.1 59.1 0 1 0 405 358.5Z"/>
<rect x="394.2" y="342.4" width="140" height="31.9" fill="url(#chk)"/>
<path d="M382.2 358.5A81.9 81.9 0 0 1 394.2 316V401A81.9 81.9 0 0 1 382.2 358.5Z M546 358.5A81.9 81.9 0 0 0 534.2 316V401A81.9 81.9 0 0 0 546 358.5Z" fill="#000"/>
<path d="M419.2 349V340H428M446.6 340H455.4V349M455.4 367.4V376.4H446.6M428 376.4H419.2V367.4" fill="none" stroke="#555" stroke-width="1" stroke-dasharray="2.4 0.8"/>
<path d="M436.8 344.4V354.4M433.9 361.4L424.4 370.8M440 361.4L449.6 370.8" stroke="#0a0a0a" stroke-width="2" fill="none"/>
<path d="M465.6 345.2H492.2V341.9L500.6 347.9L492.2 353.6V350.7H465.6Z" fill="#000"/>
<text x="465.6" y="366" font-size="7.4" fill="#8c8c8c" font-family="Liberation Sans,sans-serif" text-anchor="start" textLength="33.4" lengthAdjust="spacingAndGlyphs" >0000</text>
<text x="465.8" y="370.6" font-size="2.6" fill="#a0a0a0" font-family="Liberation Sans,sans-serif" text-anchor="start" textLength="30" lengthAdjust="spacingAndGlyphs" >SYSTEM AGENT 48136</text>
<path d="M574.5 354.1L588.6 342.9V346.5H702.5V342.9L716.8 354.1L702.5 365.4V360.6H588.6V365.4Z" fill="#a83d28"/>
<g transform="translate(599.8 0) scale(0.82 1)"><text x="0" y="359.6" font-size="13.8" fill="#f6f0ec" font-family="Liberation Sans,sans-serif" text-anchor="start" font-weight="bold" textLength="110.5" lengthAdjust="spacing" >CAUTION</text></g>
<path d="M570.9 424.3H635.5V433.7H577Z" fill="#0a0a0a"/>
<text x="580.7" y="431.9" font-size="7.7" fill="#fff" font-family="Liberation Sans,sans-serif" text-anchor="start" font-weight="bold" textLength="46" lengthAdjust="spacingAndGlyphs" >JET  INTAKE</text>
<path d="M570.9 506H635.3L627.5 515.1H570.9Z" fill="#0a0a0a"/>
<text x="579.8" y="513.7" font-size="7.7" fill="#fff" font-family="Liberation Sans,sans-serif" text-anchor="start" font-weight="bold" textLength="47.3" lengthAdjust="spacingAndGlyphs" >JET  INTAKE</text>
<path d="M192 463.8H232V455.4L246.9 469.2L232 482.8V474.4H192Z" fill="#000"/>
<text x="175.4" y="499.4" font-size="10.6" fill="#303030" font-family="Liberation Sans,sans-serif" text-anchor="start" textLength="87.1" lengthAdjust="spacingAndGlyphs" >XX78. 38837287388</text>
<text x="175.4" y="511.2" font-size="10.6" fill="#303030" font-family="Liberation Sans,sans-serif" text-anchor="start" textLength="76.4" lengthAdjust="spacingAndGlyphs" >GIGA.  ARC.  32XR</text>
<text x="175.4" y="523" font-size="10.6" fill="#303030" font-family="Liberation Sans,sans-serif" text-anchor="start" textLength="64.6" lengthAdjust="spacingAndGlyphs" >SOL.SNK  2077</text>
<rect x="277.5" y="474.4" width="36.7" height="44.5" fill="#a83d28"/>
<path d="M286 485.4H304.9V489.3H286ZM286 494.5H304.9V498.2H286ZM293.6 485.4H297.5V505.7H293.6Z" fill="#161616"/>
<path d="M398.9 482.4L417.9 514.1H380.4Z" fill="#f2c644" stroke="#2e220c" stroke-width="1.3" stroke-linejoin="round"/>
<path d="M398.9 503.4L403.50 503.40M398.9 503.4L401.84 505.10M398.9 503.4L401.20 507.38M398.9 503.4L398.90 506.80M398.9 503.4L396.60 507.38M398.9 503.4L395.96 505.10M398.9 503.4L394.30 503.40M398.9 503.4L395.96 501.70M398.9 503.4L396.60 499.42M398.9 503.4L398.90 500.00M398.9 503.4L401.20 499.42M398.9 503.4L401.84 501.70 M398.9 503.4H412" stroke="#1c1408" stroke-width="0.6" fill="none"/><circle cx="398.9" cy="503.4" r="2" fill="#1c1408"/>
<rect x="422.8" y="480.3" width="86.9" height="34" rx="1" fill="#f3c644" stroke="#2e220c" stroke-width="1.1"/>
<text x="432.2" y="489.40000000000003" font-size="4.6" fill="#4a3814" font-family="Liberation Sans,sans-serif" text-anchor="start" font-weight="bold" textLength="68.4" lengthAdjust="spacingAndGlyphs" >VERY HOT SURFACE WARNINGER</text>
<text x="434.4" y="494.20000000000005" font-size="4.6" fill="#4a3814" font-family="Liberation Sans,sans-serif" text-anchor="start" font-weight="bold" textLength="63.9" lengthAdjust="spacingAndGlyphs" >ENGINE BEHIND THE SURFACE</text>
<text x="437.7" y="503.8" font-size="4.6" fill="#4a3814" font-family="Liberation Sans,sans-serif" text-anchor="start" font-weight="bold" textLength="56.6" lengthAdjust="spacingAndGlyphs" >TENANCE ARE DO  PLEASE</text>
<text x="444.4" y="508.5" font-size="4.6" fill="#4a3814" font-family="Liberation Sans,sans-serif" text-anchor="start" font-weight="bold" textLength="43.3" lengthAdjust="spacingAndGlyphs" >WATCH THE MANUAL</text>
<path d="M434.4 497.8H498" stroke="#5a4820" stroke-width="0.5" stroke-dasharray="0.9 0.5"/>
<defs><clipPath id="c430"><path d="M398.7 579.9H425.09999999999997V606.3H398.7Z M436.3 579.9H462.7V606.3H436.3Z M398.7 617.5H425.09999999999997V643.9H398.7Z M436.3 617.5H462.7V643.9H436.3Z"/></clipPath></defs><g clip-path="url(#c430)"><circle cx="430.7" cy="611.9" r="28.65" fill="none" stroke="#0a0a0a" stroke-width="4.70"/><path fill-rule="evenodd" fill="#0a0a0a" d="M408.5 611.9A22.20 22.20 0 1 0 452.9 611.9A22.20 22.20 0 1 0 408.5 611.9Z M419.09999999999997 600.3H442.3V623.5H419.09999999999997Z"/></g>
<defs><clipPath id="c576"><path d="M561.5999999999999 564.0999999999999H573.8251612903225V576.3251612903225H561.5999999999999Z M578.7748387096774 564.0999999999999H591.0V576.3251612903225H578.7748387096774Z M561.5999999999999 581.2748387096774H573.8251612903225V593.5H561.5999999999999Z M578.7748387096774 581.2748387096774H591.0V593.5H578.7748387096774Z"/></clipPath></defs><g clip-path="url(#c576)"><circle cx="576.3" cy="578.8" r="12.66" fill="none" stroke="#0a0a0a" stroke-width="2.08"/><path fill-rule="evenodd" fill="#0a0a0a" d="M566.4890322580645 578.8A9.81 9.81 0 1 0 586.1109677419354 578.8A9.81 9.81 0 1 0 566.4890322580645 578.8Z M571.1735483870967 573.6735483870967H581.4264516129032V583.9264516129032H571.1735483870967Z"/></g>
<defs><clipPath id="c182"><path d="M168.4 603.8H180.46129032258065V615.8612903225805H168.4Z M185.33870967741936 603.8H197.4V615.8612903225805H185.33870967741936Z M168.4 620.7387096774194H180.46129032258065V632.8H168.4Z M185.33870967741936 620.7387096774194H197.4V632.8H185.33870967741936Z"/></clipPath></defs><g clip-path="url(#c182)"><circle cx="182.9" cy="618.3" r="12.48" fill="none" stroke="#0a0a0a" stroke-width="2.05"/><path fill-rule="evenodd" fill="#0a0a0a" d="M173.23225806451615 618.3A9.67 9.67 0 1 0 192.56774193548387 618.3A9.67 9.67 0 1 0 173.23225806451615 618.3Z M177.8483870967742 613.2483870967742H187.95161290322582V623.3516129032257H177.8483870967742Z"/></g>
<text x="594" y="574.9" font-size="5.2" fill="#5c5c5c" font-family="Liberation Sans,sans-serif" text-anchor="start" textLength="70.3" lengthAdjust="spacingAndGlyphs" >AVAIL IN METEOR RICALIBU</text>
<text x="594" y="580.6" font-size="5.2" fill="#5c5c5c" font-family="Liberation Sans,sans-serif" text-anchor="start" textLength="66" lengthAdjust="spacingAndGlyphs" >MISSION SYSTEM 34732 BETA</text>
<text x="594" y="586.3" font-size="5.2" fill="#5c5c5c" font-family="Liberation Sans,sans-serif" text-anchor="start" textLength="55" lengthAdjust="spacingAndGlyphs" >SCHEDULE AGENT 48136</text>
<text x="200.7" y="613.1" font-size="5.2" fill="#6a6a6a" font-family="Liberation Sans,sans-serif" text-anchor="start" textLength="60.8" lengthAdjust="spacingAndGlyphs" >ALIS METEOR(RIS) ROHDE</text>
<text x="200.7" y="619.4" font-size="5.2" fill="#6a6a6a" font-family="Liberation Sans,sans-serif" text-anchor="start" textLength="60" lengthAdjust="spacingAndGlyphs" >TARGETING SYSTEM 77998</text>
<text x="200.7" y="625.3" font-size="5.2" fill="#6a6a6a" font-family="Liberation Sans,sans-serif" text-anchor="start" textLength="52" lengthAdjust="spacingAndGlyphs" >SCHEDULE AGENT 48136</text>
</svg>
</div>
<div id="ruler-h" class="panel" style="left:29.2px;top:67.6px;width:806.8px;height:13.4px;background:#4c4c4c;">
<div class="b" style="left:0px;top:0px;width:11.8px;height:13.4px;background:#565656;"></div>
<div class="b" style="left:21.35px;top:0.4px;width:0.8px;height:13px;background:#5a5a5a;"></div>
<span class="t" style="left:23.35px;top:5.77px;font-size:6.6px;color:#8c8c8c;">600</span>
<div class="b" style="left:51.2px;top:0.4px;width:0.8px;height:13px;background:#5a5a5a;"></div>
<span class="t" style="left:53.2px;top:5.77px;font-size:6.6px;color:#8c8c8c;">400</span>
<div class="b" style="left:81.05px;top:0.4px;width:0.8px;height:13px;background:#5a5a5a;"></div>
<span class="t" style="left:83.05px;top:5.77px;font-size:6.6px;color:#8c8c8c;">200</span>
<div class="b" style="left:110.9px;top:0.4px;width:0.8px;height:13px;background:#5a5a5a;"></div>
<span class="t" style="left:112.9px;top:5.77px;font-size:6.6px;color:#8c8c8c;">0</span>
<div class="b" style="left:140.75px;top:0.4px;width:0.8px;height:13px;background:#5a5a5a;"></div>
<span class="t" style="left:142.75px;top:5.77px;font-size:6.6px;color:#8c8c8c;">200</span>
<div class="b" style="left:170.6px;top:0.4px;width:0.8px;height:13px;background:#5a5a5a;"></div>
<span class="t" style="left:172.6px;top:5.77px;font-size:6.6px;color:#8c8c8c;">400</span>
<div class="b" style="left:200.45px;top:0.4px;width:0.8px;height:13px;background:#5a5a5a;"></div>
<span class="t" style="left:202.45px;top:5.77px;font-size:6.6px;color:#8c8c8c;">600</span>
<div class="b" style="left:230.3px;top:0.4px;width:0.8px;height:13px;background:#5a5a5a;"></div>
<span class="t" style="left:232.3px;top:5.77px;font-size:6.6px;color:#8c8c8c;">800</span>
<div class="b" style="left:260.15px;top:0.4px;width:0.8px;height:13px;background:#5a5a5a;"></div>
<span class="t" style="left:262.15px;top:5.77px;font-size:6.6px;color:#8c8c8c;">1000</span>
<div class="b" style="left:290px;top:0.4px;width:0.8px;height:13px;background:#5a5a5a;"></div>
<span class="t" style="left:292px;top:5.77px;font-size:6.6px;color:#8c8c8c;">1200</span>
<div class="b" style="left:319.85px;top:0.4px;width:0.8px;height:13px;background:#5a5a5a;"></div>
<span class="t" style="left:321.85px;top:5.77px;font-size:6.6px;color:#8c8c8c;">1400</span>
<div class="b" style="left:349.7px;top:0.4px;width:0.8px;height:13px;background:#5a5a5a;"></div>
<span class="t" style="left:351.7px;top:5.77px;font-size:6.6px;color:#8c8c8c;">1600</span>
<div class="b" style="left:379.55px;top:0.4px;width:0.8px;height:13px;background:#5a5a5a;"></div>
<span class="t" style="left:381.55px;top:5.77px;font-size:6.6px;color:#8c8c8c;">1800</span>
<div class="b" style="left:409.4px;top:0.4px;width:0.8px;height:13px;background:#5a5a5a;"></div>
<span class="t" style="left:411.4px;top:5.77px;font-size:6.6px;color:#8c8c8c;">2000</span>
<div class="b" style="left:439.25px;top:0.4px;width:0.8px;height:13px;background:#5a5a5a;"></div>
<span class="t" style="left:441.25px;top:5.77px;font-size:6.6px;color:#8c8c8c;">2200</span>
<div class="b" style="left:469.1px;top:0.4px;width:0.8px;height:13px;background:#5a5a5a;"></div>
<span class="t" style="left:471.1px;top:5.77px;font-size:6.6px;color:#8c8c8c;">2400</span>
<div class="b" style="left:498.95px;top:0.4px;width:0.8px;height:13px;background:#5a5a5a;"></div>
<span class="t" style="left:500.95px;top:5.77px;font-size:6.6px;color:#8c8c8c;">2600</span>
<div class="b" style="left:528.8px;top:0.4px;width:0.8px;height:13px;background:#5a5a5a;"></div>
<span class="t" style="left:530.8px;top:5.77px;font-size:6.6px;color:#8c8c8c;">2800</span>
<div class="b" style="left:558.65px;top:0.4px;width:0.8px;height:13px;background:#5a5a5a;"></div>
<span class="t" style="left:560.65px;top:5.77px;font-size:6.6px;color:#8c8c8c;">3000</span>
<div class="b" style="left:588.5px;top:0.4px;width:0.8px;height:13px;background:#5a5a5a;"></div>
<span class="t" style="left:590.5px;top:5.77px;font-size:6.6px;color:#8c8c8c;">3200</span>
<div class="b" style="left:618.35px;top:0.4px;width:0.8px;height:13px;background:#5a5a5a;"></div>
<span class="t" style="left:620.35px;top:5.77px;font-size:6.6px;color:#8c8c8c;">3400</span>
<div class="b" style="left:648.2px;top:0.4px;width:0.8px;height:13px;background:#5a5a5a;"></div>
<span class="t" style="left:650.2px;top:5.77px;font-size:6.6px;color:#8c8c8c;">3600</span>
<div class="b" style="left:678.05px;top:0.4px;width:0.8px;height:13px;background:#5a5a5a;"></div>
<span class="t" style="left:680.05px;top:5.77px;font-size:6.6px;color:#8c8c8c;">3800</span>
<div class="b" style="left:707.9px;top:0.4px;width:0.8px;height:13px;background:#5a5a5a;"></div>
<span class="t" style="left:709.9px;top:5.77px;font-size:6.6px;color:#8c8c8c;">4000</span>
<div class="b" style="left:737.75px;top:0.4px;width:0.8px;height:13px;background:#5a5a5a;"></div>
<span class="t" style="left:739.75px;top:5.77px;font-size:6.6px;color:#8c8c8c;">4200</span>
<div class="b" style="left:767.6px;top:0.4px;width:0.8px;height:13px;background:#5a5a5a;"></div>
<span class="t" style="left:769.6px;top:5.77px;font-size:6.6px;color:#8c8c8c;">4400</span>
<div class="b" style="left:797.45px;top:0.4px;width:0.8px;height:13px;background:#5a5a5a;"></div>
<span class="t" style="left:799.45px;top:5.77px;font-size:6.6px;color:#8c8c8c;">46</span>
<div class="b" style="left:688.4px;top:0.9px;width:1px;height:9.5px;background:#eee;"></div>
</div>
<div id="ruler-v" class="panel" style="left:29.2px;top:81px;width:11.8px;height:583px;background:#4c4c4c;">
<div class="b" style="left:0px;top:21.8px;width:11.8px;height:0.8px;background:#5a5a5a;"></div>
<span class="t" style="left:2.8px;top:23.26px;font-size:6.4px;color:#8c8c8c;">2</span>
<span class="t" style="left:2.8px;top:28.56px;font-size:6.4px;color:#8c8c8c;">0</span>
<span class="t" style="left:2.8px;top:33.86px;font-size:6.4px;color:#8c8c8c;">0</span>
<div class="b" style="left:0px;top:51.65px;width:11.8px;height:0.8px;background:#5a5a5a;"></div>
<span class="t" style="left:2.8px;top:53.11px;font-size:6.4px;color:#8c8c8c;">4</span>
<span class="t" style="left:2.8px;top:58.41px;font-size:6.4px;color:#8c8c8c;">0</span>
<span class="t" style="left:2.8px;top:63.71px;font-size:6.4px;color:#8c8c8c;">0</span>
<div class="b" style="left:0px;top:81.5px;width:11.8px;height:0.8px;background:#5a5a5a;"></div>
<span class="t" style="left:2.8px;top:82.96px;font-size:6.4px;color:#8c8c8c;">6</span>
<span class="t" style="left:2.8px;top:88.26px;font-size:6.4px;color:#8c8c8c;">0</span>
<span class="t" style="left:2.8px;top:93.56px;font-size:6.4px;color:#8c8c8c;">0</span>
<div class="b" style="left:0px;top:111.35px;width:11.8px;height:0.8px;background:#5a5a5a;"></div>
<span class="t" style="left:2.8px;top:112.81px;font-size:6.4px;color:#8c8c8c;">8</span>
<span class="t" style="left:2.8px;top:118.11px;font-size:6.4px;color:#8c8c8c;">0</span>
<span class="t" style="left:2.8px;top:123.41px;font-size:6.4px;color:#8c8c8c;">0</span>
<div class="b" style="left:0px;top:141.2px;width:11.8px;height:0.8px;background:#5a5a5a;"></div>
<span class="t" style="left:2.8px;top:142.66px;font-size:6.4px;color:#8c8c8c;">1</span>
<span class="t" style="left:2.8px;top:147.96px;font-size:6.4px;color:#8c8c8c;">0</span>
<span class="t" style="left:2.8px;top:153.26px;font-size:6.4px;color:#8c8c8c;">0</span>
<span class="t" style="left:2.8px;top:158.56px;font-size:6.4px;color:#8c8c8c;">0</span>
<div class="b" style="left:0px;top:171.05px;width:11.8px;height:0.8px;background:#5a5a5a;"></div>
<span class="t" style="left:2.8px;top:172.51px;font-size:6.4px;color:#8c8c8c;">1</span>
<span class="t" style="left:2.8px;top:177.81px;font-size:6.4px;color:#8c8c8c;">2</span>
<span class="t" style="left:2.8px;top:183.11px;font-size:6.4px;color:#8c8c8c;">0</span>
<span class="t" style="left:2.8px;top:188.41px;font-size:6.4px;color:#8c8c8c;">0</span>
<div class="b" style="left:0px;top:200.9px;width:11.8px;height:0.8px;background:#5a5a5a;"></div>
<span class="t" style="left:2.8px;top:202.36px;font-size:6.4px;color:#8c8c8c;">1</span>
<span class="t" style="left:2.8px;top:207.66px;font-size:6.4px;color:#8c8c8c;">4</span>
<span class="t" style="left:2.8px;top:212.96px;font-size:6.4px;color:#8c8c8c;">0</span>
<span class="t" style="left:2.8px;top:218.26px;font-size:6.4px;color:#8c8c8c;">0</span>
<div class="b" style="left:0px;top:230.75px;width:11.8px;height:0.8px;background:#5a5a5a;"></div>
<span class="t" style="left:2.8px;top:232.21px;font-size:6.4px;color:#8c8c8c;">1</span>
<span class="t" style="left:2.8px;top:237.51px;font-size:6.4px;color:#8c8c8c;">6</span>
<span class="t" style="left:2.8px;top:242.81px;font-size:6.4px;color:#8c8c8c;">0</span>
<span class="t" style="left:2.8px;top:248.11px;font-size:6.4px;color:#8c8c8c;">0</span>
<div class="b" style="left:0px;top:260.6px;width:11.8px;height:0.8px;background:#5a5a5a;"></div>
<span class="t" style="left:2.8px;top:262.06px;font-size:6.4px;color:#8c8c8c;">1</span>
<span class="t" style="left:2.8px;top:267.36px;font-size:6.4px;color:#8c8c8c;">8</span>
<span class="t" style="left:2.8px;top:272.66px;font-size:6.4px;color:#8c8c8c;">0</span>
<span class="t" style="left:2.8px;top:277.96px;font-size:6.4px;color:#8c8c8c;">0</span>
<div class="b" style="left:0px;top:290.45px;width:11.8px;height:0.8px;background:#5a5a5a;"></div>
<span class="t" style="left:2.8px;top:291.91px;font-size:6.4px;color:#8c8c8c;">2</span>
<span class="t" style="left:2.8px;top:297.21px;font-size:6.4px;color:#8c8c8c;">0</span>
<span class="t" style="left:2.8px;top:302.51px;font-size:6.4px;color:#8c8c8c;">0</span>
<span class="t" style="left:2.8px;top:307.81px;font-size:6.4px;color:#8c8c8c;">0</span>
<div class="b" style="left:0px;top:320.3px;width:11.8px;height:0.8px;background:#5a5a5a;"></div>
<span class="t" style="left:2.8px;top:321.76px;font-size:6.4px;color:#8c8c8c;">2</span>
<span class="t" style="left:2.8px;top:327.06px;font-size:6.4px;color:#8c8c8c;">2</span>
<span class="t" style="left:2.8px;top:332.36px;font-size:6.4px;color:#8c8c8c;">0</span>
<span class="t" style="left:2.8px;top:337.66px;font-size:6.4px;color:#8c8c8c;">0</span>
<div class="b" style="left:0px;top:350.15px;width:11.8px;height:0.8px;background:#5a5a5a;"></div>
<span class="t" style="left:2.8px;top:351.61px;font-size:6.4px;color:#8c8c8c;">2</span>
<span class="t" style="left:2.8px;top:356.91px;font-size:6.4px;color:#8c8c8c;">4</span>
<span class="t" style="left:2.8px;top:362.21px;font-size:6.4px;color:#8c8c8c;">0</span>
<span class="t" style="left:2.8px;top:367.51px;font-size:6.4px;color:#8c8c8c;">0</span>
<div class="b" style="left:0px;top:380px;width:11.8px;height:0.8px;background:#5a5a5a;"></div>
<span class="t" style="left:2.8px;top:381.46px;font-size:6.4px;color:#8c8c8c;">2</span>
<span class="t" style="left:2.8px;top:386.76px;font-size:6.4px;color:#8c8c8c;">6</span>
<span class="t" style="left:2.8px;top:392.06px;font-size:6.4px;color:#8c8c8c;">0</span>
<span class="t" style="left:2.8px;top:397.36px;font-size:6.4px;color:#8c8c8c;">0</span>
<div class="b" style="left:0px;top:409.85px;width:11.8px;height:0.8px;background:#5a5a5a;"></div>
<span class="t" style="left:2.8px;top:411.31px;font-size:6.4px;color:#8c8c8c;">2</span>
<span class="t" style="left:2.8px;top:416.61px;font-size:6.4px;color:#8c8c8c;">8</span>
<span class="t" style="left:2.8px;top:421.91px;font-size:6.4px;color:#8c8c8c;">0</span>
<span class="t" style="left:2.8px;top:427.21px;font-size:6.4px;color:#8c8c8c;">0</span>
<div class="b" style="left:0px;top:439.7px;width:11.8px;height:0.8px;background:#5a5a5a;"></div>
<span class="t" style="left:2.8px;top:441.16px;font-size:6.4px;color:#8c8c8c;">3</span>
<span class="t" style="left:2.8px;top:446.46px;font-size:6.4px;color:#8c8c8c;">0</span>
<span class="t" style="left:2.8px;top:451.76px;font-size:6.4px;color:#8c8c8c;">0</span>
<span class="t" style="left:2.8px;top:457.06px;font-size:6.4px;color:#8c8c8c;">0</span>
<div class="b" style="left:0px;top:469.55px;width:11.8px;height:0.8px;background:#5a5a5a;"></div>
<span class="t" style="left:2.8px;top:471.01px;font-size:6.4px;color:#8c8c8c;">3</span>
<span class="t" style="left:2.8px;top:476.31px;font-size:6.4px;color:#8c8c8c;">2</span>
<span class="t" style="left:2.8px;top:481.61px;font-size:6.4px;color:#8c8c8c;">0</span>
<span class="t" style="left:2.8px;top:486.91px;font-size:6.4px;color:#8c8c8c;">0</span>
<div class="b" style="left:0px;top:499.4px;width:11.8px;height:0.8px;background:#5a5a5a;"></div>
<span class="t" style="left:2.8px;top:500.86px;font-size:6.4px;color:#8c8c8c;">3</span>
<span class="t" style="left:2.8px;top:506.16px;font-size:6.4px;color:#8c8c8c;">4</span>
<span class="t" style="left:2.8px;top:511.46px;font-size:6.4px;color:#8c8c8c;">0</span>
<span class="t" style="left:2.8px;top:516.76px;font-size:6.4px;color:#8c8c8c;">0</span>
<div class="b" style="left:0px;top:529.25px;width:11.8px;height:0.8px;background:#5a5a5a;"></div>
<span class="t" style="left:2.8px;top:530.71px;font-size:6.4px;color:#8c8c8c;">3</span>
<span class="t" style="left:2.8px;top:536.01px;font-size:6.4px;color:#8c8c8c;">6</span>
<span class="t" style="left:2.8px;top:541.31px;font-size:6.4px;color:#8c8c8c;">0</span>
<span class="t" style="left:2.8px;top:546.61px;font-size:6.4px;color:#8c8c8c;">0</span>
<div class="b" style="left:0px;top:559.1px;width:11.8px;height:0.8px;background:#5a5a5a;"></div>
<span class="t" style="left:2.8px;top:560.56px;font-size:6.4px;color:#8c8c8c;">3</span>
<span class="t" style="left:2.8px;top:565.86px;font-size:6.4px;color:#8c8c8c;">8</span>
<span class="t" style="left:2.8px;top:571.16px;font-size:6.4px;color:#8c8c8c;">0</span>
<span class="t" style="left:2.8px;top:576.46px;font-size:6.4px;color:#8c8c8c;">0</span>
<div class="b" style="left:-0.2px;top:353.4px;width:9.3px;height:1px;background:#eee;"></div>
</div>
<div id="vscroll" class="panel" style="left:836px;top:68px;width:13px;height:596px;background:#4a4a4a;">
<svg class="i" style="left:5.2px;top:6.6px;" width="4.6" height="2.4" viewBox="0 0 4.6 2.4"><path d="M0 2.6L2.5 0L5 2.6" fill="none" stroke="#888" stroke-width="0.8"/></svg>
<div class="b" style="left:4px;top:194.2px;width:7.6px;height:206px;background:#696969;"></div>
<svg class="i" style="left:5.5px;top:586.5px;" width="5" height="2.6" viewBox="0 0 5 2.6"><path d="M0 0L2.5 2.6L5 0" fill="none" stroke="#888" stroke-width="0.8"/></svg>
</div>
<div id="statusbar" class="panel" style="left:0px;top:664px;width:850px;height:10px;background:#4a4a4a;">
<div class="b" style="left:0px;top:0px;width:28px;height:10px;background:#535353;"></div>
<div class="b" style="left:28px;top:0px;width:35px;height:10px;background:#454545;"></div>
<span class="t" style="left:32px;top:1.28px;font-size:8.2px;color:#e0e0e0;transform:scaleX(0.9319);">30,25 %</span>
<div class="b" style="left:63px;top:0px;width:137px;height:10px;background:#4d4d4d;"></div>
<span class="t" style="left:80.5px;top:1.48px;font-size:7.8px;color:#d8d8d8;transform:scaleX(0.9367);">4000 px x 4000 px (300 ppp)</span>
<svg class="i" style="left:193.6px;top:3.5px;" width="1.8" height="3.6" viewBox="0 0 1.8 3.6"><path d="M0 0 L1.8 1.8 L0 3.6" fill="none" stroke="#8a8a8a" stroke-width="0.7"/></svg>
<div class="b" style="left:200px;top:0px;width:638px;height:10px;background:#4a4a4a;"></div>
<svg class="i" style="left:206.5px;top:3.5px;" width="1.8" height="3.6" viewBox="0 0 1.8 3.6"><path d="M1.8 0L0 1.8L1.8 3.6" fill="none" stroke="#888" stroke-width="0.7"/></svg>
<div class="b" style="left:400px;top:1px;width:235px;height:8px;background:#686868;"></div>
<svg class="i" style="left:827.2px;top:3.7px;" width="1.6" height="3.2" viewBox="0 0 1.6 3.2"><path d="M0 0 L1.6 1.6 L0 3.2" fill="none" stroke="#888" stroke-width="0.7"/></svg>
<div class="b" style="left:838px;top:0px;width:12px;height:10px;background:#4a4a4a;"></div>
</div>
<div class="b" style="left:849px;top:47px;width:412px;height:627px;background:#383838;"></div>
<div class="b" style="left:849px;top:47px;width:412px;height:8.5px;background:#3e3e3e;"></div>
<svg class="i" style="left:868.8px;top:49.8px;" width="4.6" height="3.2" viewBox="0 0 4.6 3.2"><path d="M1.7 0.2L0.3 1.6L1.7 3M4.2 0.2L2.8 1.6L4.2 3" fill="none" stroke="#ccc" stroke-width="0.7"/></svg>
<svg class="i" style="left:1070.8px;top:49.8px;" width="4.6" height="3.2" viewBox="0 0 4.6 3.2"><path d="M0.3 0.2L1.7 1.6L0.3 3M2.8 0.2L4.2 1.6L2.8 3" fill="none" stroke="#ccc" stroke-width="0.7"/></svg>
<svg class="i" style="left:1254.6px;top:49.8px;" width="4.6" height="3.2" viewBox="0 0 4.6 3.2"><path d="M0.3 0.2L1.7 1.6L0.3 3M2.8 0.2L4.2 1.6L2.8 3" fill="none" stroke="#ccc" stroke-width="0.7"/></svg>
<div id="iconstrip" class="panel" style="left:848.8px;top:55.5px;width:31.7px;height:618.5px;background:#383838;">
<div class="b" style="left:0.8px;top:0.5px;width:28.4px;height:70px;background:#535353;"></div>
<div class="b" style="left:0.8px;top:72.2px;width:28.4px;height:50px;background:#535353;"></div>
<div class="b" style="left:0.8px;top:123.5px;width:28.4px;height:495px;background:#525252;"></div>
<svg class="i" style="left:8.5px;top:9.8px;opacity:.88;" width="13" height="13" viewBox="0 0 12 12"><rect x="1" y="0.8" width="2.6" height="2.6" fill="none" stroke="#e2e2e2" stroke-width="0.8"/><rect x="1" y="4.6" width="2.6" height="2.6" fill="none" stroke="#e2e2e2" stroke-width="0.8"/><rect x="0.6" y="8" width="3.4" height="3.4" fill="#e2e2e2"/><path d="M7.2 2.2C11.4 2.6 11 9 6.8 10" fill="none" stroke="#e2e2e2" stroke-width="1.3" /><path d="M5.2 2.2L8 0.2V4.4Z" fill="#e2e2e2" /></svg>
<svg class="i" style="left:9.35px;top:31.25px;opacity:.88;" width="12.5" height="12.5" viewBox="0 0 12 12"><path d="M1.4 0.6L11.2 6L1.4 11.4Z" fill="#e2e2e2" /></svg>
<svg class="i" style="left:8.75px;top:51.85px;opacity:.88;" width="12.5" height="12.5" viewBox="0 0 12 12"><path d="M1 1.4H11A0.6 0.6 0 0 1 11.6 2V7.6A0.6 0.6 0 0 1 11 8.2H6.6L3.6 11V8.2H1A0.6 0.6 0 0 1 0.4 7.6V2A0.6 0.6 0 0 1 1 1.4Z" fill="#e2e2e2" /></svg>
<svg class="i" style="left:8.65px;top:81.95px;opacity:.9;" width="13.5" height="13.5" viewBox="0 0 12 12"><path d="M11 0.4C11.9 1.1 11.7 1.9 11.2 2.5L7.2 7.6L5 5.8L9.6 1C10 0.5 10.5 0.1 11 0.4ZM4.4 6.6L6.4 8.2C6 10.2 4 11.4 1.6 11C3 10 2.8 7.8 4.4 6.6Z" fill="#e2e2e2" /><path d="M0.2 1.6H1.2M2 1.6H4.6M0.2 3.4H1.2M2 3.4H4.6M0.2 5.2H1.2M2 5.2H3.6" fill="none" stroke="#e2e2e2" stroke-width="0.8" /></svg>
<svg class="i" style="left:9.1px;top:104px;opacity:.9;" width="13" height="13" viewBox="0 0 12 12"><path d="M0.4 3H11.6M0.4 8.4H8" fill="none" stroke="#e2e2e2" stroke-width="1.2" /><path d="M1.6 3A1.9 2 0 0 1 5.4 3A1.9 2 0 0 1 1.6 3Z" fill="#e2e2e2" /><path d="M7.6 8.4L10.4 5.6A2 2 0 0 1 11.6 8.4A2 2 0 0 1 10.4 11.2Z" fill="#e2e2e2" /><path d="M6.4 7H8.4V9.8H6.4Z" fill="#e2e2e2" /></svg>
</div>
<div id="panel-caractere" class="panel" style="left:880.2px;top:55.5px;width:199.3px;height:166.5px;background:#535353;">
<div class="b" style="left:0px;top:0px;width:199.3px;height:20.5px;background:#424242;"></div>
<div class="b" style="left:0px;top:0px;width:44.3px;height:20.5px;background:#535353;"></div>
<span class="t" style="left:6.3px;top:5.24px;font-size:8.9px;color:#fff;font-weight:bold;-webkit-text-stroke:0;transform:scaleX(0.7985);">Caractère</span>
<span class="t" style="left:51.4px;top:5.24px;font-size:8.9px;color:#a3a3a3;font-weight:bold;-webkit-text-stroke:0;transform:scaleX(0.8067);">Paragraphe</span>
<svg class="i" style="left:188.6px;top:7.6px;" width="7.2" height="5.2" viewBox="0 0 7.2 5.2"><path d="M0 0.5H7.2M0 1.9H7.2M0 3.3H7.2M0 4.7H7.2" stroke="#9a9a9a" stroke-width="0.9"/></svg>
<div class="b" style="left:97.3px;top:0px;width:0.7px;height:20.5px;background:#3a3a3a;"></div>
<div class="b" style="left:3.4px;top:31.8px;width:86.1px;height:10.7px;background:#454545;border-radius:1px;"></div>
<div class="b" style="left:79.6px;top:31.8px;width:0.7px;height:10.7px;background:#535353;"></div>
<span class="t" style="left:5.8px;top:33.54px;font-size:8.7px;color:#dcdcdc;transform:scaleX(0.7475);">Arial</span>
<svg class="i" style="left:83px;top:36.2px;" width="4.4" height="2.2" viewBox="0 0 4.4 2.2"><path d="M0 0 L2.2 2.2 L4.4 0" fill="none" stroke="#aaa" stroke-width="0.9"/></svg>
<div class="b" style="left:100.8px;top:31.8px;width:52.5px;height:10.7px;background:#454545;border-radius:1px;"></div>
<div class="b" style="left:143.6px;top:31.8px;width:0.7px;height:10.7px;background:#535353;"></div>
<span class="t" style="left:103.4px;top:33.54px;font-size:8.7px;color:#dcdcdc;transform:scaleX(0.8604);">Narrow ...</span>
<svg class="i" style="left:146.6px;top:36.2px;" width="4.4" height="2.2" viewBox="0 0 4.4 2.2"><path d="M0 0 L2.2 2.2 L4.4 0" fill="none" stroke="#aaa" stroke-width="0.9"/></svg>
<svg class="i" style="left:2.55px;top:48.55px;" width="12.5" height="12.5" viewBox="0 0 12 12"><text x="7.4" y="10.6" font-size="13" fill="#e2e2e2" font-family="Liberation Serif,serif" text-anchor="middle" >T</text><text x="2" y="10.8" font-size="7" fill="#e2e2e2" font-family="Liberation Serif,serif" text-anchor="middle" >T</text></svg>
<div class="b" style="left:18.1px;top:49.5px;width:53.3px;height:10.5px;background:#454545;border-radius:1px;"></div>
<div class="b" style="left:62.4px;top:49.5px;width:0.7px;height:10.5px;background:#535353;"></div>
<span class="t" style="left:20.4px;top:51.14px;font-size:8.7px;color:#dcdcdc;transform:scaleX(0.8578);">52,5 pt</span>
<svg class="i" style="left:65px;top:53.9px;" width="4.4" height="2.2" viewBox="0 0 4.4 2.2"><path d="M0 0 L2.2 2.2 L4.4 0" fill="none" stroke="#aaa" stroke-width="0.9"/></svg>
<svg class="i" style="left:86.85px;top:48.55px;" width="12.5" height="12.5" viewBox="0 0 12 12"><text x="7" y="5.2" font-size="6.4" fill="#e2e2e2" font-family="Liberation Sans,serif" text-anchor="middle" >A</text><text x="7" y="11.6" font-size="6.4" fill="#e2e2e2" font-family="Liberation Sans,serif" text-anchor="middle" >A</text><path d="M4.4 5.9H9.6M4.4 11.9H9.6" fill="none" stroke="#e2e2e2" stroke-width="0.6" /><path d="M1.6 3V11" fill="none" stroke="#e2e2e2" stroke-width="0.7" /><path d="M1.6 1.8L2.8 3.8H0.4Z M1.6 12L0.4 10H2.8Z" fill="#e2e2e2" /></svg>
<div class="b" style="left:103.4px;top:49.5px;width:49.9px;height:10.5px;background:#454545;border-radius:1px;"></div>
<div class="b" style="left:143.6px;top:49.5px;width:0.7px;height:10.5px;background:#535353;"></div>
<span class="t" style="left:105.3px;top:51.14px;font-size:8.7px;color:#dcdcdc;transform:scaleX(0.8597);">41,56 pt</span>
<svg class="i" style="left:146.6px;top:53.9px;" width="4.4" height="2.2" viewBox="0 0 4.4 2.2"><path d="M0 0 L2.2 2.2 L4.4 0" fill="none" stroke="#aaa" stroke-width="0.9"/></svg>
<svg class="i" style="left:2.3px;top:63.6px;" width="13" height="13" viewBox="0 0 12 12"><text x="2.6" y="8.6" font-size="9" fill="#e2e2e2" font-family="Liberation Sans,serif" text-anchor="middle" >V</text><text x="9" y="8.6" font-size="9" fill="#e2e2e2" font-family="Liberation Sans,serif" text-anchor="middle" >A</text><path d="M5.2 0.8L4.4 9.6" fill="none" stroke="#e2e2e2" stroke-width="0.6" /><path d="M6.4 11H11.4" fill="none" stroke="#e2e2e2" stroke-width="0.7" /><path d="M5.6 11L7.2 10V12Z" fill="#e2e2e2" /></svg>
<div class="b" style="left:18.1px;top:64.7px;width:53.3px;height:10.5px;background:#454545;border-radius:1px;"></div>
<div class="b" style="left:62.4px;top:64.7px;width:0.7px;height:10.5px;background:#535353;"></div>
<span class="t" style="left:20.4px;top:66.34px;font-size:8.7px;color:#dcdcdc;transform:scaleX(0.8163);">Métrique</span>
<svg class="i" style="left:65px;top:69.1px;" width="4.4" height="2.2" viewBox="0 0 4.4 2.2"><path d="M0 0 L2.2 2.2 L4.4 0" fill="none" stroke="#aaa" stroke-width="0.9"/></svg>
<svg class="i" style="left:87.1px;top:63.4px;" width="13.4" height="13.4" viewBox="0 0 12 12"><rect x="0.4" y="0.6" width="11.2" height="7.6" fill="#e2e2e2"/><text x="6" y="7.4" font-size="7.6" fill="#4a4a4a" font-family="Liberation Sans,serif" text-anchor="middle" font-weight="bold" textLength="10" lengthAdjust="spacingAndGlyphs">VA</text><path d="M1.4 10.6H10.6" fill="none" stroke="#e2e2e2" stroke-width="0.7" /><path d="M0.2 10.6L1.8 9.6V11.6Z M11.8 10.6L10.2 11.6V9.6Z" fill="#e2e2e2" /></svg>
<div class="b" style="left:103.4px;top:64.7px;width:49.9px;height:10.5px;background:#454545;border-radius:1px;"></div>
<div class="b" style="left:143.6px;top:64.7px;width:0.7px;height:10.5px;background:#535353;"></div>
<span class="t" style="left:105.6px;top:66.34px;font-size:8.7px;color:#dcdcdc;">0</span>
<svg class="i" style="left:146.6px;top:69.1px;" width="4.4" height="2.2" viewBox="0 0 4.4 2.2"><path d="M0 0 L2.2 2.2 L4.4 0" fill="none" stroke="#aaa" stroke-width="0.9"/></svg>
<svg class="i" style="left:2.55px;top:78.45px;" width="12.5" height="12.5" viewBox="0 0 12 12"><text x="7.6" y="10.8" font-size="13.5" fill="#e2e2e2" font-family="Liberation Serif,serif" text-anchor="middle" >T</text><path d="M1.6 2.4V9.6" fill="none" stroke="#e2e2e2" stroke-width="0.7" /><path d="M1.6 0.8L2.8 2.8H0.4Z M1.6 11.2L0.4 9.2H2.8Z" fill="#e2e2e2" /></svg>
<div class="b" style="left:18.1px;top:79.5px;width:39px;height:10.2px;background:#454545;border-radius:1px;"></div>
<span class="t" style="left:20.4px;top:81.04px;font-size:8.7px;color:#dcdcdc;transform:scaleX(0.8685);">100 %</span>
<svg class="i" style="left:99.55px;top:78.45px;" width="12.5" height="12.5" viewBox="0 0 12 12"><text x="6" y="8.4" font-size="11.5" fill="#e2e2e2" font-family="Liberation Serif,serif" text-anchor="middle" font-weight="bold" >T</text><path d="M1.6 10.6H10.4" fill="none" stroke="#e2e2e2" stroke-width="0.7" /><path d="M0.2 10.6L2 9.6V11.6Z M11.8 10.6L10 11.6V9.6Z" fill="#e2e2e2" /></svg>
<div class="b" style="left:115.2px;top:79.5px;width:38.4px;height:10.2px;background:#454545;border-radius:1px;"></div>
<span class="t" style="left:117.6px;top:81.04px;font-size:8.7px;color:#dcdcdc;transform:scaleX(0.8604);">100 %</span>
<svg class="i" style="left:2.55px;top:93.55px;" width="12.5" height="12.5" viewBox="0 0 12 12"><text x="3.4" y="8.6" font-size="9.5" fill="#e2e2e2" font-family="Liberation Sans,serif" text-anchor="middle" >A</text><path d="M0.4 9.8H6.6" fill="none" stroke="#e2e2e2" stroke-width="0.6" /><text x="9.2" y="5" font-size="5.4" fill="#e2e2e2" font-family="Liberation Sans,serif" text-anchor="middle" >a</text><path d="M9.2 6.6V10" fill="none" stroke="#e2e2e2" stroke-width="0.7" /><path d="M9.2 5.6L10.4 7.4H8Z M9.2 11.4L8 9.6H10.4Z" fill="#e2e2e2" /></svg>
<div class="b" style="left:18.1px;top:94.8px;width:39px;height:10.1px;background:#454545;border-radius:1px;"></div>
<span class="t" style="left:21.3px;top:96.24px;font-size:8.7px;color:#dcdcdc;transform:scaleX(0.8276);">0 pt</span>
<span class="t" style="left:78.6px;top:96.24px;font-size:8.7px;color:#dcdcdc;transform:scaleX(0.8195);">Couleur :</span>
<div class="b" style="left:114.2px;top:93.3px;width:40.6px;height:13.2px;background:#fff;box-shadow:0 0 0 0.6px #3a3a3a;"></div>
<svg class="i" style="left:10.6px;top:112.5px;" width="12" height="12" viewBox="0 0 12 12"><text x="6" y="10.2" font-size="12" fill="#e2e2e2" font-family="Liberation Serif,serif" text-anchor="middle" font-weight="bold" >T</text></svg>
<svg class="i" style="left:28.3px;top:112.5px;" width="12" height="12" viewBox="0 0 12 12"><text x="6" y="10.2" font-size="12" fill="#e2e2e2" font-family="Liberation Serif,serif" text-anchor="middle" font-style="italic" >T</text></svg>
<svg class="i" style="left:46.3px;top:112.5px;" width="12" height="12" viewBox="0 0 12 12"><text x="6" y="10.2" font-size="11.5" fill="#e2e2e2" font-family="Liberation Serif,serif" text-anchor="middle" textLength="12" lengthAdjust="spacingAndGlyphs">TT</text></svg>
<svg class="i" style="left:63.8px;top:112.5px;" width="12" height="12" viewBox="0 0 12 12"><text x="3.6" y="10.2" font-size="11.5" fill="#e2e2e2" font-family="Liberation Serif,serif" text-anchor="middle" >T</text><text x="9" y="10.2" font-size="8" fill="#e2e2e2" font-family="Liberation Serif,serif" text-anchor="middle" >T</text></svg>
<svg class="i" style="left:81.6px;top:112.5px;" width="12" height="12" viewBox="0 0 12 12"><text x="4.6" y="10.2" font-size="11.5" fill="#e2e2e2" font-family="Liberation Serif,serif" text-anchor="middle" >T</text><text x="10" y="4.4" font-size="4.6" fill="#e2e2e2" font-family="Liberation Serif,serif" text-anchor="middle" >1</text></svg>
<svg class="i" style="left:99.6px;top:112.5px;" width="12" height="12" viewBox="0 0 12 12"><text x="4.6" y="10.2" font-size="11.5" fill="#e2e2e2" font-family="Liberation Serif,serif" text-anchor="middle" >T</text><text x="10" y="11" font-size="4.6" fill="#e2e2e2" font-family="Liberation Serif,serif" text-anchor="middle" >1</text></svg>
<svg class="i" style="left:117.2px;top:112.5px;" width="12" height="12" viewBox="0 0 12 12"><text x="6" y="10.2" font-size="12" fill="#e2e2e2" font-family="Liberation Serif,serif" text-anchor="middle" >T</text><path d="M1.6 11.6H10.4" fill="none" stroke="#e2e2e2" stroke-width="0.7" /></svg>
<svg class="i" style="left:133.8px;top:112.5px;" width="12" height="12" viewBox="0 0 12 12"><text x="6" y="10.2" font-size="12" fill="#e2e2e2" font-family="Liberation Serif,serif" text-anchor="middle" >T</text><path d="M1 6.6H11" fill="none" stroke="#e2e2e2" stroke-width="0.7" /></svg>
<svg class="i" style="left:10.6px;top:132.9px;" width="12" height="12" viewBox="0 0 12 12"><text x="6" y="10.4" font-size="12.5" fill="#8e8e8e" font-family="Liberation Serif,serif" text-anchor="middle" >fi</text></svg>
<svg class="i" style="left:28.3px;top:132.9px;" width="12" height="12" viewBox="0 0 12 12"><text x="5" y="10" font-size="11" fill="#8e8e8e" font-family="Liberation Serif,serif" text-anchor="middle" font-style="italic" >o</text><path d="M6.6 6.4C8.6 5 9.6 4.4 10.6 4.6" fill="none" stroke="#8e8e8e" stroke-width="0.6" /></svg>
<svg class="i" style="left:46.3px;top:132.9px;" width="12" height="12" viewBox="0 0 12 12"><text x="6" y="10.4" font-size="11" fill="#8e8e8e" font-family="Liberation Serif,serif" text-anchor="middle" >st</text></svg>
<svg class="i" style="left:63.8px;top:132.9px;" width="12" height="12" viewBox="0 0 12 12"><text x="6.6" y="10.4" font-size="12.5" fill="#8e8e8e" font-family="Liberation Serif,serif" text-anchor="middle" font-style="italic" >A</text><path d="M1 9.6C2 10.8 3 9 4.4 5" fill="none" stroke="#8e8e8e" stroke-width="0.6" /></svg>
<svg class="i" style="left:81.6px;top:132.9px;" width="12" height="12" viewBox="0 0 12 12"><text x="6" y="10.6" font-size="9.5" fill="#8e8e8e" font-family="Liberation Serif,serif" text-anchor="middle" >aa</text><path d="M0.8 3H11.2" fill="none" stroke="#8e8e8e" stroke-width="0.6" /><path d="M11.6 3L10 2V4Z" fill="#8e8e8e" /></svg>
<svg class="i" style="left:99.6px;top:132.9px;" width="12" height="12" viewBox="0 0 12 12"><text x="6" y="10.4" font-size="13" fill="#8e8e8e" font-family="Liberation Serif,serif" text-anchor="middle" font-style="italic" >T</text></svg>
<svg class="i" style="left:117.2px;top:132.9px;" width="12" height="12" viewBox="0 0 12 12"><text x="3.6" y="10.4" font-size="12" fill="#8e8e8e" font-family="Liberation Serif,serif" text-anchor="middle" >1</text><text x="8.6" y="5.6" font-size="5.6" fill="#8e8e8e" font-family="Liberation Serif,serif" text-anchor="middle" >st</text></svg>
<svg class="i" style="left:133.8px;top:132.9px;" width="12" height="12" viewBox="0 0 12 12"><text x="6" y="10.4" font-size="12.5" fill="#8e8e8e" font-family="Liberation Serif,serif" text-anchor="middle" >½</text></svg>
<div class="b" style="left:3.8px;top:151.7px;width:82.8px;height:11.4px;background:#454545;border-radius:1px;"></div>
<span class="t" style="left:8.8px;top:153.64px;font-size:8.7px;color:#dcdcdc;transform:scaleX(0.8045);">Français</span>
<svg class="i" style="left:80.8px;top:156.4px;" width="4.4" height="2.2" viewBox="0 0 4.4 2.2"><path d="M0 0 L2.2 2.2 L4.4 0" fill="none" stroke="#aaa" stroke-width="0.9"/></svg>
<svg class="i" style="left:90.3px;top:151.6px;" width="11" height="11" viewBox="0 0 12 12"><text x="3" y="7.6" font-size="8" fill="#e2e2e2" font-family="Liberation Sans,serif" text-anchor="middle" >a</text><text x="8.6" y="10.8" font-size="11" fill="#e2e2e2" font-family="Liberation Sans,serif" text-anchor="middle" >a</text></svg>
<div class="b" style="left:106.6px;top:151.7px;width:47.6px;height:11.4px;background:#454545;border-radius:1px;"></div>
<span class="t" style="left:111.3px;top:153.64px;font-size:8.7px;color:#dcdcdc;transform:scaleX(0.8629);">Forte</span>
<svg class="i" style="left:146.2px;top:156.4px;" width="4.4" height="2.2" viewBox="0 0 4.4 2.2"><path d="M0 0 L2.2 2.2 L4.4 0" fill="none" stroke="#aaa" stroke-width="0.9"/></svg>
</div>
<div id="panel-calques" class="panel" style="left:880.2px;top:223.5px;width:199.3px;height:450.5px;background:#535353;">
<div class="b" style="left:0px;top:0px;width:199.3px;height:21.3px;background:#424242;"></div>
<div class="b" style="left:0px;top:0px;width:39.6px;height:21.3px;background:#535353;"></div>
<span class="t" style="left:6.1px;top:5.24px;font-size:8.9px;color:#fff;font-weight:bold;-webkit-text-stroke:0;transform:scaleX(0.7819);">Calques</span>
<span class="t" style="left:46.1px;top:5.24px;font-size:8.9px;color:#a3a3a3;font-weight:bold;-webkit-text-stroke:0;transform:scaleX(0.7737);">Couches</span>
<span class="t" style="left:88.1px;top:5.24px;font-size:8.9px;color:#a3a3a3;font-weight:bold;-webkit-text-stroke:0;transform:scaleX(0.7711);">Tracés</span>
<svg class="i" style="left:188.8px;top:7.6px;" width="7.2" height="5.2" viewBox="0 0 7.2 5.2"><path d="M0 0.5H7.2M0 1.9H7.2M0 3.3H7.2M0 4.7H7.2" stroke="#9a9a9a" stroke-width="0.9"/></svg>
<div class="b" style="left:39.8px;top:0px;width:0.7px;height:21.3px;background:#3a3a3a;"></div>
<div class="b" style="left:81.3px;top:0px;width:0.7px;height:21.3px;background:#3a3a3a;"></div>
<div class="b" style="left:115.1px;top:0px;width:0.7px;height:21.3px;background:#3a3a3a;"></div>
<div class="b" style="left:3.1px;top:29px;width:75.5px;height:11.7px;background:#454545;border-radius:1px;"></div>
<svg class="i" style="left:7.6px;top:30.6px;" width="8.4" height="8.4" viewBox="0 0 12 12"><circle cx="4.6" cy="4.6" r="3.2" fill="none" stroke="#e2e2e2" stroke-width="1.7"/><path d="M7.2 7.2L11 11" fill="none" stroke="#e2e2e2" stroke-width="2" /></svg>
<span class="t" style="left:18.8px;top:30.29px;font-size:9.2px;color:#dcdcdc;transform:scaleX(0.8282);">Type</span>
<svg class="i" style="left:72.1px;top:34px;" width="4.4" height="2.2" viewBox="0 0 4.4 2.2"><path d="M0 0 L2.2 2.2 L4.4 0" fill="none" stroke="#aaa" stroke-width="0.9"/></svg>
<svg class="i" style="left:93.45px;top:29.05px;" width="11.5" height="11.5" viewBox="0 0 12 12"><rect x="0.8" y="1.8" width="10.4" height="8.4" rx="0.8" fill="none" stroke="#e2e2e2" stroke-width="1"/><path d="M2.4 8.6L4.6 5.2L6.2 7.4L7.4 6L9.6 8.6Z" fill="#e2e2e2" /></svg>
<svg class="i" style="left:111.05px;top:29.05px;" width="11.5" height="11.5" viewBox="0 0 12 12"><circle cx="6" cy="6" r="4.8" fill="none" stroke="#e2e2e2" stroke-width="1"/><path d="M9.4 2.6A4.8 4.8 0 0 1 2.6 9.4Z" fill="#e2e2e2" /></svg>
<svg class="i" style="left:128.65px;top:29.05px;" width="11.5" height="11.5" viewBox="0 0 12 12"><text x="6" y="10.6" font-size="13.5" fill="#e2e2e2" font-family="Liberation Serif,serif" text-anchor="middle" font-weight="bold" >T</text></svg>
<svg class="i" style="left:146.45px;top:29.05px;" width="11.5" height="11.5" viewBox="0 0 12 12"><rect x="2.2" y="2.2" width="7.6" height="7.6" fill="none" stroke="#e2e2e2" stroke-width="1.1"/><path d="M0.8 0.8H3.4V3.4H0.8ZM8.6 0.8H11.2V3.4H8.6ZM0.8 8.6H3.4V11.2H0.8ZM8.6 8.6H11.2V11.2H8.6Z" fill="#e2e2e2" /></svg>
<svg class="i" style="left:164.75px;top:29.05px;" width="11.5" height="11.5" viewBox="0 0 12 12"><path d="M3.6 1H7.6L10 3.4V8.4H3.6Z" fill="none" stroke="#e2e2e2" stroke-width="1" /><path d="M1 6.6H6.2V11.4H1Z" fill="#e2e2e2" /><path d="M2.2 6.6V5.4A1.4 1.4 0 0 1 5 5.4V6.6" fill="none" stroke="#e2e2e2" stroke-width="0.9" /></svg>
<svg class="i" style="left:190.2px;top:28.5px;" width="7.4" height="12" viewBox="0 0 7.4 12"><rect x="1.4" y="2" width="4.6" height="9.4" rx="2.3" fill="#484848"/><circle cx="3.7" cy="3.3" r="2.9" fill="#e8e8e8"/></svg>
<div class="b" style="left:0px;top:44.9px;width:199.3px;height:0.8px;background:#464646;"></div>
<div class="b" style="left:3.1px;top:49.8px;width:114.7px;height:11.7px;background:#454545;border-radius:1px;"></div>
<span class="t" style="left:8.5px;top:51.34px;font-size:8.7px;color:#dcdcdc;transform:scaleX(0.8321);">Normal</span>
<svg class="i" style="left:111.6px;top:54.8px;" width="4.4" height="2.2" viewBox="0 0 4.4 2.2"><path d="M0 0 L2.2 2.2 L4.4 0" fill="none" stroke="#aaa" stroke-width="0.9"/></svg>
<span class="t" style="left:123.8px;top:51.34px;font-size:8.7px;color:#dcdcdc;transform:scaleX(0.8625);">Opacité :</span>
<div class="b" style="left:158.1px;top:49.8px;width:26.7px;height:11.7px;background:#454545;border-radius:1px;"></div>
<span class="t" style="left:160.1px;top:51.34px;font-size:8.7px;color:#f0f0f0;transform:scaleX(0.8807);">100 %</span>
<div class="b" style="left:187.4px;top:49.8px;width:8.4px;height:11.7px;background:#454545;border-radius:1px;"></div>
<svg class="i" style="left:189.4px;top:54.8px;" width="4.4" height="2.2" viewBox="0 0 4.4 2.2"><path d="M0 0 L2.2 2.2 L4.4 0" fill="none" stroke="#aaa" stroke-width="0.9"/></svg>
<div class="b" style="left:0px;top:65.7px;width:199.3px;height:0.8px;background:#464646;"></div>
<span class="t" style="left:3.5px;top:71.44px;font-size:8.7px;color:#dcdcdc;transform:scaleX(0.8641);">Verrou :</span>
<svg class="i" style="left:36.8px;top:70.2px;" width="11" height="11" viewBox="0 0 12 12"><rect x="0.8" y="0.8" width="10.4" height="10.4" fill="none" stroke="#8a8a8a" stroke-width="0.8"/><path d="M1.6 1.6H4.4V4.4H1.6ZM7.4 1.6H10.2V4.4H7.4ZM4.4 4.4H7.4V7.4H4.4ZM1.6 7.4H4.4V10.2H1.6ZM7.4 7.4H10.2V10.2H7.4Z" fill="#9a9a9a" /></svg>
<svg class="i" style="left:53.3px;top:70.2px;" width="11" height="11" viewBox="0 0 12 12"><path d="M10.8 0.6C11.6 1.2 11.4 1.8 11 2.4L6.2 8L4.4 6.6L9.6 1C10 0.6 10.4 0.4 10.8 0.6ZM3.8 7.4L5.4 8.8C5 10.6 3 11.6 0.6 11.2C2 10.4 2 8.4 3.8 7.4Z" fill="#a8a8a8" /></svg>
<svg class="i" style="left:68.3px;top:70.2px;" width="11" height="11" viewBox="0 0 12 12"><path d="M6 0L8.5 3H6.8V5.2H9V3.5L12 6L9 8.5V6.8H6.8V9H8.5L6 12L3.5 9H5.2V6.8H3V8.5L0 6L3 3.5V5.2H5.2V3H3.5Z" fill="#e2e2e2" /></svg>
<svg class="i" style="left:85.1px;top:70.2px;" width="11" height="11" viewBox="0 0 12 12"><path d="M2.6 0.6V9.4H11.4M0.6 2.6H9.4V11.4" fill="none" stroke="#e2e2e2" stroke-width="1" /><path d="M9 0.4L11.6 3" fill="none" stroke="#e2e2e2" stroke-width="0.8" /></svg>
<svg class="i" style="left:101.8px;top:70.2px;" width="11" height="11" viewBox="0 0 12 12"><path d="M1.6 5.2H10.4V11.4H1.6Z" fill="#e2e2e2" /><path d="M3.6 5.2V3.4A2.4 2.4 0 0 1 8.4 3.4V5.2" fill="none" stroke="#e2e2e2" stroke-width="1.2" /><path d="M5.4 7.4H6.6V9.4H5.4Z" fill="#535353" /></svg>
<span class="t" style="left:132.8px;top:71.44px;font-size:8.7px;color:#dcdcdc;transform:scaleX(0.8523);">Fond :</span>
<div class="b" style="left:158.1px;top:70px;width:26.7px;height:11.5px;background:#454545;border-radius:1px;"></div>
<span class="t" style="left:160.1px;top:71.44px;font-size:8.7px;color:#f0f0f0;transform:scaleX(0.8807);">100 %</span>
<div class="b" style="left:187.4px;top:70px;width:8.4px;height:11.5px;background:#454545;border-radius:1px;"></div>
<svg class="i" style="left:189.4px;top:74.9px;" width="4.4" height="2.2" viewBox="0 0 4.4 2.2"><path d="M0 0 L2.2 2.2 L4.4 0" fill="none" stroke="#aaa" stroke-width="0.9"/></svg>
<div id="layer-list" class="panel" style="left:0px;top:87.1px;width:187.5px;height:347px;background:#4a4a4a;">
<div class="b" style="left:0px;top:0.8px;width:22px;height:29.6px;background:#535353;"></div>
<div class="b" style="left:22.6px;top:0.8px;width:165px;height:29.6px;background:#6b6b6b;"></div>
<svg class="i" style="left:5.6px;top:10.3px;" width="11" height="11" viewBox="0 0 12 12"><path d="M0.2 6C1.8 3.2 4 2 6 2C8 2 10.2 3.2 11.8 6C10.2 8.8 8 10 6 10C4 10 1.8 8.8 0.2 6ZM6 3.8A2.2 2.2 0 1 0 6.01 3.8Z" fill="#ececec" fill-rule="evenodd"/><circle cx="6" cy="6" r="1.05" fill="#ececec"/></svg>
<svg class="i" style="left:22.3px;top:1.9px;" width="27.6" height="27.6" viewBox="0 0 27.6 27.6"><path d="M0.5 7V0.5H10M17.6 0.5H27.1V7M27.1 20.6V27.1H17.6M10 27.1H0.5V20.6" fill="none" stroke="#f0f0f0" stroke-width="0.9"/></svg>
<span class="t" style="left:31.6px;top:8.5px;font-size:15.5px;color:#f4f4f4;font-family:'Liberation Serif',serif;">T</span>
<span class="t" style="left:54.8px;top:11.54px;font-size:8.7px;color:#e6e6e6;transform:scaleX(0.8747);">! copie</span>
<div class="b" style="left:0px;top:30.7px;width:22px;height:30.2px;background:#535353;"></div>
<div class="b" style="left:22.6px;top:30.7px;width:165px;height:30.2px;background:#535353;"></div>
<svg class="i" style="left:5.6px;top:40.5px;" width="11" height="11" viewBox="0 0 12 12"><path d="M0.2 6C1.8 3.2 4 2 6 2C8 2 10.2 3.2 11.8 6C10.2 8.8 8 10 6 10C4 10 1.8 8.8 0.2 6ZM6 3.8A2.2 2.2 0 1 0 6.01 3.8Z" fill="#ececec" fill-rule="evenodd"/><circle cx="6" cy="6" r="1.05" fill="#ececec"/></svg>
<svg class="i" style="left:24.6px;top:34.5px;box-shadow:0 0 0 0.7px #3c3c3c;" width="23.4" height="23" viewBox="0 0 23.4 23"><defs><pattern id="ck147" width="4" height="4" patternUnits="userSpaceOnUse"><rect width="4" height="4" fill="#fff"/><rect width="2" height="2" fill="#d0d0d0"/><rect x="2" y="2" width="2" height="2" fill="#d0d0d0"/></pattern></defs><rect width="23.4" height="23" fill="url(#ck147)"/><rect x="13" y="2" width="2" height="1.2" fill="#b8402c"/></svg>
<span class="t" style="left:55px;top:41.74px;font-size:8.7px;color:#e6e6e6;transform:scaleX(0.7694);">TRIANGLE ROUGE</span>
<div class="b" style="left:0px;top:61.6px;width:22px;height:16.8px;background:#535353;"></div>
<div class="b" style="left:22.6px;top:61.6px;width:165px;height:16.8px;background:#535353;"></div>
<svg class="i" style="left:5.6px;top:65.3px;" width="11" height="11" viewBox="0 0 12 12"><path d="M0.2 6C1.8 3.2 4 2 6 2C8 2 10.2 3.2 11.8 6C10.2 8.8 8 10 6 10C4 10 1.8 8.8 0.2 6ZM6 3.8A2.2 2.2 0 1 0 6.01 3.8Z" fill="#ececec" fill-rule="evenodd"/><circle cx="6" cy="6" r="1.05" fill="#ececec"/></svg>
<svg class="i" style="left:26.4px;top:68.8px;" width="2" height="4" viewBox="0 0 2 4"><path d="M0 0 L2 2 L0 4" fill="none" stroke="#a8a8a8" stroke-width="0.8"/></svg>
<svg class="i" style="left:33.3px;top:65px;" width="11" height="11" viewBox="0 0 12 12"><path d="M0.6 1.8H4.4L5.4 3H11.4V10.4H0.6Z" fill="#d6d6d6" /><path d="M0.6 4.2H11.4" fill="none" stroke="#9a9a9a" stroke-width="0.5" /></svg>
<span class="t" style="left:53.1px;top:66.54px;font-size:8.7px;color:#e6e6e6;transform:scaleX(0.8172);">laser</span>
<div class="b" style="left:0px;top:79px;width:22px;height:18.6px;background:#535353;"></div>
<div class="b" style="left:22.6px;top:79px;width:165px;height:18.6px;background:#535353;"></div>
<svg class="i" style="left:5.6px;top:83.6px;" width="11" height="11" viewBox="0 0 12 12"><path d="M0.2 6C1.8 3.2 4 2 6 2C8 2 10.2 3.2 11.8 6C10.2 8.8 8 10 6 10C4 10 1.8 8.8 0.2 6ZM6 3.8A2.2 2.2 0 1 0 6.01 3.8Z" fill="#ececec" fill-rule="evenodd"/><circle cx="6" cy="6" r="1.05" fill="#ececec"/></svg>
<svg class="i" style="left:25.6px;top:88.1px;" width="4" height="2" viewBox="0 0 4 2"><path d="M0 0 L2 2 L4 0" fill="none" stroke="#a8a8a8" stroke-width="0.8"/></svg>
<svg class="i" style="left:33.3px;top:83.3px;" width="11" height="11" viewBox="0 0 12 12"><path d="M0.6 1.8H4.4L5.4 3H10.4V5H0.6Z" fill="#d6d6d6" /><path d="M2 5.8H12L10.6 10.4H0.6Z" fill="#d6d6d6" /><path d="M0.9 5V10.2" fill="none" stroke="#d6d6d6" stroke-width="0.7" /></svg>
<span class="t" style="left:53.1px;top:84.84px;font-size:8.7px;color:#e6e6e6;transform:scaleX(0.7828);">ETIQUETTE ROUGE</span>
<div class="b" style="left:0px;top:98.3px;width:22px;height:28.6px;background:#535353;"></div>
<div class="b" style="left:22.6px;top:98.3px;width:165px;height:28.6px;background:#535353;"></div>
<svg class="i" style="left:5.6px;top:107.9px;" width="11" height="11" viewBox="0 0 12 12"><path d="M0.2 6C1.8 3.2 4 2 6 2C8 2 10.2 3.2 11.8 6C10.2 8.8 8 10 6 10C4 10 1.8 8.8 0.2 6ZM6 3.8A2.2 2.2 0 1 0 6.01 3.8Z" fill="#ececec" fill-rule="evenodd"/><circle cx="6" cy="6" r="1.05" fill="#ececec"/></svg>
<span class="t" style="left:42.8px;top:106px;font-size:15.5px;color:#f0f0f0;font-family:'Liberation Serif',serif;">T</span>
<span class="t" style="left:66.6px;top:109.14px;font-size:8.7px;color:#e6e6e6;transform:scaleX(0.7921);">VERY HOT SURF...E TAKE CARE</span>
<div class="b" style="left:0px;top:127.6px;width:22px;height:30.1px;background:#535353;"></div>
<div class="b" style="left:22.6px;top:127.6px;width:165px;height:30.1px;background:#535353;"></div>
<svg class="i" style="left:5.6px;top:137.95px;" width="11" height="11" viewBox="0 0 12 12"><path d="M0.2 6C1.8 3.2 4 2 6 2C8 2 10.2 3.2 11.8 6C10.2 8.8 8 10 6 10C4 10 1.8 8.8 0.2 6ZM6 3.8A2.2 2.2 0 1 0 6.01 3.8Z" fill="#ececec" fill-rule="evenodd"/><circle cx="6" cy="6" r="1.05" fill="#ececec"/></svg>
<span class="t" style="left:42.8px;top:136.05px;font-size:15.5px;color:#f0f0f0;font-family:'Liberation Serif',serif;">T</span>
<span class="t" style="left:66.6px;top:139.19px;font-size:8.7px;color:#e6e6e6;">!</span>
<div class="b" style="left:0px;top:158.4px;width:22px;height:30px;background:#535353;"></div>
<div class="b" style="left:22.6px;top:158.4px;width:165px;height:30px;background:#535353;"></div>
<svg class="i" style="left:5.6px;top:168.1px;" width="11" height="11" viewBox="0 0 12 12"><path d="M0.2 6C1.8 3.2 4 2 6 2C8 2 10.2 3.2 11.8 6C10.2 8.8 8 10 6 10C4 10 1.8 8.8 0.2 6ZM6 3.8A2.2 2.2 0 1 0 6.01 3.8Z" fill="#ececec" fill-rule="evenodd"/><circle cx="6" cy="6" r="1.05" fill="#ececec"/></svg>
<svg class="i" style="left:36.8px;top:162.2px;box-shadow:0 0 0 0.7px #3c3c3c;" width="23" height="22.8" viewBox="0 0 23 22.8"><defs><pattern id="ck155" width="4" height="4" patternUnits="userSpaceOnUse"><rect width="4" height="4" fill="#fff"/><rect width="2" height="2" fill="#d0d0d0"/><rect x="2" y="2" width="2" height="2" fill="#d0d0d0"/></pattern></defs><rect width="23" height="22.8" fill="url(#ck155)"/><rect x="7" y="2" width="3" height="1.2" fill="#b8402c"/></svg>
<span class="t" style="left:66.6px;top:169.34px;font-size:8.7px;color:#e6e6e6;transform:scaleX(0.7828);">ETIQUETTE ROUGE</span>
<div class="b" style="left:0px;top:189.1px;width:22px;height:28.7px;background:#535353;"></div>
<div class="b" style="left:22.6px;top:189.1px;width:165px;height:28.7px;background:#535353;"></div>
<svg class="i" style="left:5.6px;top:198.15px;" width="11" height="11" viewBox="0 0 12 12"><path d="M0.2 6C1.8 3.2 4 2 6 2C8 2 10.2 3.2 11.8 6C10.2 8.8 8 10 6 10C4 10 1.8 8.8 0.2 6ZM6 3.8A2.2 2.2 0 1 0 6.01 3.8Z" fill="#ececec" fill-rule="evenodd"/><circle cx="6" cy="6" r="1.05" fill="#ececec"/></svg>
<svg class="i" style="left:24.6px;top:192.15px;box-shadow:0 0 0 0.7px #3c3c3c;" width="23.4" height="23" viewBox="0 0 23.4 23"><defs><pattern id="ck157" width="4" height="4" patternUnits="userSpaceOnUse"><rect width="4" height="4" fill="#fff"/><rect width="2" height="2" fill="#d0d0d0"/><rect x="2" y="2" width="2" height="2" fill="#d0d0d0"/></pattern></defs><rect width="23.4" height="23" fill="url(#ck157)"/><rect x="8" y="5" width="1.8" height="1.2" fill="#222"/></svg>
<span class="t" style="left:55px;top:199.39px;font-size:8.7px;color:#e6e6e6;transform:scaleX(0.7814);">CROIX</span>
<div class="b" style="left:0px;top:218.5px;width:22px;height:18.2px;background:#535353;"></div>
<div class="b" style="left:22.6px;top:218.5px;width:165px;height:18.2px;background:#535353;"></div>
<svg class="i" style="left:5.6px;top:222.9px;" width="11" height="11" viewBox="0 0 12 12"><path d="M0.2 6C1.8 3.2 4 2 6 2C8 2 10.2 3.2 11.8 6C10.2 8.8 8 10 6 10C4 10 1.8 8.8 0.2 6ZM6 3.8A2.2 2.2 0 1 0 6.01 3.8Z" fill="#ececec" fill-rule="evenodd"/><circle cx="6" cy="6" r="1.05" fill="#ececec"/></svg>
<svg class="i" style="left:26.4px;top:226.4px;" width="2" height="4" viewBox="0 0 2 4"><path d="M0 0 L2 2 L0 4" fill="none" stroke="#a8a8a8" stroke-width="0.8"/></svg>
<svg class="i" style="left:33.3px;top:222.6px;" width="11" height="11" viewBox="0 0 12 12"><path d="M0.6 1.8H4.4L5.4 3H11.4V10.4H0.6Z" fill="#d6d6d6" /><path d="M0.6 4.2H11.4" fill="none" stroke="#9a9a9a" stroke-width="0.5" /></svg>
<span class="t" style="left:53.1px;top:224.14px;font-size:8.7px;color:#e6e6e6;transform:scaleX(0.7166);">CRANE</span>
<div class="b" style="left:0px;top:237.4px;width:22px;height:17.8px;background:#535353;"></div>
<div class="b" style="left:22.6px;top:237.4px;width:165px;height:17.8px;background:#535353;"></div>
<svg class="i" style="left:5.6px;top:241.6px;" width="11" height="11" viewBox="0 0 12 12"><path d="M0.2 6C1.8 3.2 4 2 6 2C8 2 10.2 3.2 11.8 6C10.2 8.8 8 10 6 10C4 10 1.8 8.8 0.2 6ZM6 3.8A2.2 2.2 0 1 0 6.01 3.8Z" fill="#ececec" fill-rule="evenodd"/><circle cx="6" cy="6" r="1.05" fill="#ececec"/></svg>
<svg class="i" style="left:25.6px;top:246.1px;" width="4" height="2" viewBox="0 0 4 2"><path d="M0 0 L2 2 L4 0" fill="none" stroke="#a8a8a8" stroke-width="0.8"/></svg>
<svg class="i" style="left:33.3px;top:241.3px;" width="11" height="11" viewBox="0 0 12 12"><path d="M0.6 1.8H4.4L5.4 3H10.4V5H0.6Z" fill="#d6d6d6" /><path d="M2 5.8H12L10.6 10.4H0.6Z" fill="#d6d6d6" /><path d="M0.9 5V10.2" fill="none" stroke="#d6d6d6" stroke-width="0.7" /></svg>
<span class="t" style="left:53.1px;top:242.84px;font-size:8.7px;color:#e6e6e6;transform:scaleX(0.8716);">ILLUMINATI</span>
<div class="b" style="left:0px;top:255.9px;width:22px;height:30.1px;background:#535353;"></div>
<div class="b" style="left:22.6px;top:255.9px;width:165px;height:30.1px;background:#535353;"></div>
<svg class="i" style="left:5.6px;top:266.25px;" width="11" height="11" viewBox="0 0 12 12"><path d="M0.2 6C1.8 3.2 4 2 6 2C8 2 10.2 3.2 11.8 6C10.2 8.8 8 10 6 10C4 10 1.8 8.8 0.2 6ZM6 3.8A2.2 2.2 0 1 0 6.01 3.8Z" fill="#ececec" fill-rule="evenodd"/><circle cx="6" cy="6" r="1.05" fill="#ececec"/></svg>
<span class="t" style="left:42.8px;top:264.35px;font-size:15.5px;color:#f0f0f0;font-family:'Liberation Serif',serif;">T</span>
<span class="t" style="left:66.6px;top:267.49px;font-size:8.7px;color:#e6e6e6;transform:scaleX(0.8929);">GNR  -0</span>
<div class="b" style="left:0px;top:286.7px;width:22px;height:29.7px;background:#535353;"></div>
<div class="b" style="left:22.6px;top:286.7px;width:165px;height:29.7px;background:#535353;"></div>
<svg class="i" style="left:5.6px;top:296.25px;" width="11" height="11" viewBox="0 0 12 12"><path d="M0.2 6C1.8 3.2 4 2 6 2C8 2 10.2 3.2 11.8 6C10.2 8.8 8 10 6 10C4 10 1.8 8.8 0.2 6ZM6 3.8A2.2 2.2 0 1 0 6.01 3.8Z" fill="#ececec" fill-rule="evenodd"/><circle cx="6" cy="6" r="1.05" fill="#ececec"/></svg>
<svg class="i" style="left:36.8px;top:290.35px;box-shadow:0 0 0 0.7px #3c3c3c;" width="23" height="22.8" viewBox="0 0 23 22.8"><defs><pattern id="ck163" width="4" height="4" patternUnits="userSpaceOnUse"><rect width="4" height="4" fill="#fff"/><rect width="2" height="2" fill="#d0d0d0"/><rect x="2" y="2" width="2" height="2" fill="#d0d0d0"/></pattern></defs><rect width="23" height="22.8" fill="url(#ck163)"/></svg>
<span class="t" style="left:66.6px;top:297.49px;font-size:8.7px;color:#e6e6e6;transform:scaleX(0.8716);">ILLUMINATI</span>
<div class="b" style="left:0px;top:317px;width:22px;height:17.6px;background:#535353;"></div>
<div class="b" style="left:22.6px;top:317px;width:165px;height:17.6px;background:#535353;"></div>
<svg class="i" style="left:5.6px;top:321.1px;" width="11" height="11" viewBox="0 0 12 12"><path d="M0.2 6C1.8 3.2 4 2 6 2C8 2 10.2 3.2 11.8 6C10.2 8.8 8 10 6 10C4 10 1.8 8.8 0.2 6ZM6 3.8A2.2 2.2 0 1 0 6.01 3.8Z" fill="#ececec" fill-rule="evenodd"/><circle cx="6" cy="6" r="1.05" fill="#ececec"/></svg>
<svg class="i" style="left:26.4px;top:324.6px;" width="2" height="4" viewBox="0 0 2 4"><path d="M0 0 L2 2 L0 4" fill="none" stroke="#a8a8a8" stroke-width="0.8"/></svg>
<svg class="i" style="left:33.3px;top:320.8px;" width="11" height="11" viewBox="0 0 12 12"><path d="M0.6 1.8H4.4L5.4 3H11.4V10.4H0.6Z" fill="#d6d6d6" /><path d="M0.6 4.2H11.4" fill="none" stroke="#9a9a9a" stroke-width="0.5" /></svg>
<span class="t" style="left:53.1px;top:322.34px;font-size:8.7px;color:#e6e6e6;transform:scaleX(0.8716);">ILLUMINATI</span>
<div class="b" style="left:0px;top:335.2px;width:22px;height:18.2px;background:#535353;"></div>
<div class="b" style="left:22.6px;top:335.2px;width:165px;height:18.2px;background:#535353;"></div>
<svg class="i" style="left:5.6px;top:339.6px;" width="11" height="11" viewBox="0 0 12 12"><path d="M0.2 6C1.8 3.2 4 2 6 2C8 2 10.2 3.2 11.8 6C10.2 8.8 8 10 6 10C4 10 1.8 8.8 0.2 6ZM6 3.8A2.2 2.2 0 1 0 6.01 3.8Z" fill="#ececec" fill-rule="evenodd"/><circle cx="6" cy="6" r="1.05" fill="#ececec"/></svg>
<svg class="i" style="left:25.6px;top:344.1px;" width="4" height="2" viewBox="0 0 4 2"><path d="M0 0 L2 2 L4 0" fill="none" stroke="#a8a8a8" stroke-width="0.8"/></svg>
<svg class="i" style="left:33.3px;top:339.3px;" width="11" height="11" viewBox="0 0 12 12"><path d="M0.6 1.8H4.4L5.4 3H10.4V5H0.6Z" fill="#d6d6d6" /><path d="M2 5.8H12L10.6 10.4H0.6Z" fill="#d6d6d6" /><path d="M0.9 5V10.2" fill="none" stroke="#d6d6d6" stroke-width="0.7" /></svg>
<span class="t" style="left:53.1px;top:340.84px;font-size:8.7px;color:#e6e6e6;transform:scaleX(0.7700);">SIDE PORTE</span>
</div>
<div class="b" style="left:187.5px;top:87.1px;width:11.8px;height:347px;background:#4d4d4d;"></div>
<svg class="i" style="left:191.1px;top:93.3px;" width="4.6" height="2.4" viewBox="0 0 4.6 2.4"><path d="M0 2.4L2.3 0L4.6 2.4" fill="none" stroke="#7e7e7e" stroke-width="0.8"/></svg>
<div class="b" style="left:190.6px;top:100px;width:6.4px;height:134px;background:#6b6b6b;"></div>
<svg class="i" style="left:191.1px;top:425.5px;" width="4.6" height="2.4" viewBox="0 0 4.6 2.4"><path d="M0 0L2.3 2.4L4.6 0" fill="none" stroke="#7e7e7e" stroke-width="0.8"/></svg>
<div class="b" style="left:0px;top:434.3px;width:199.3px;height:16.2px;background:#535353;"></div>
<div class="b" style="left:0px;top:434.1px;width:199.3px;height:0.7px;background:#454545;"></div>
<svg class="i" style="left:49.4px;top:437.9px;" width="10.6" height="10.6" viewBox="0 0 12 12"><path d="M5 4.2H3.4A1.8 1.8 0 0 0 3.4 7.8H5M7 4.2H8.6A1.8 1.8 0 0 1 8.6 7.8H7M4.4 6H7.6" fill="none" stroke="#7c7c7c" stroke-width="0.9" /></svg>
<svg class="i" style="left:69.9px;top:437.9px;" width="10.6" height="10.6" viewBox="0 0 12 12"><text x="5.6" y="9.6" font-size="11.5" fill="#e2e2e2" font-family="Liberation Sans,serif" text-anchor="middle" font-style="italic" >fx</text><path d="M9.6 10.2H12L10.8 11.6Z" fill="#e2e2e2" /></svg>
<svg class="i" style="left:89.4px;top:437.9px;" width="10.6" height="10.6" viewBox="0 0 12 12"><rect x="0.6" y="1.8" width="10.8" height="8.4" fill="#e2e2e2"/><circle cx="6" cy="6" r="2.5" fill="#535353"/></svg>
<svg class="i" style="left:109.9px;top:437.9px;" width="10.6" height="10.6" viewBox="0 0 12 12"><circle cx="5.4" cy="5.4" r="4.4" fill="none" stroke="#e2e2e2" stroke-width="1"/><path d="M8.5 2.3A4.4 4.4 0 0 1 2.3 8.5Z" fill="#e2e2e2" /><path d="M9.6 10.2H12L10.8 11.6Z" fill="#e2e2e2" /></svg>
<svg class="i" style="left:129.4px;top:437.9px;" width="10.6" height="10.6" viewBox="0 0 12 12"><path d="M0.6 1.8H4.4L5.4 3H11.4V10.4H0.6Z" fill="#d6d6d6" /><path d="M0.6 4.2H11.4" fill="none" stroke="#9a9a9a" stroke-width="0.5" /></svg>
<svg class="i" style="left:149.5px;top:437.9px;" width="10.6" height="10.6" viewBox="0 0 12 12"><rect x="1" y="1" width="10" height="10" rx="0.8" fill="none" stroke="#e2e2e2" stroke-width="1.1"/><path d="M6 3.4V8.6M3.4 6H8.6" fill="none" stroke="#e2e2e2" stroke-width="1.1" /></svg>
<svg class="i" style="left:169.3px;top:437.9px;" width="10.6" height="10.6" viewBox="0 0 12 12"><path d="M2 3.4H10L9.4 11.4H2.6Z" fill="#d8d8d8" /><path d="M1.2 1.8H10.8V2.8H1.2ZM4.4 0.6H7.6V1.8H4.4Z" fill="#d8d8d8" /><path d="M4.4 4.6V10M6 4.6V10M7.6 4.6V10" fill="none" stroke="#535353" stroke-width="0.6" /></svg>
</div>
<div id="panel-nuancier" class="panel" style="left:1082.5px;top:55.5px;width:178.5px;height:309px;background:#535353;">
<div class="b" style="left:0px;top:0px;width:178.5px;height:20.5px;background:#424242;"></div>
<div class="b" style="left:35.5px;top:0px;width:42px;height:20.5px;background:#535353;"></div>
<span class="t" style="left:6.5px;top:5.24px;font-size:8.9px;color:#a3a3a3;font-weight:bold;-webkit-text-stroke:0;transform:scaleX(0.7933);">Couleur</span>
<span class="t" style="left:41.3px;top:5.24px;font-size:8.9px;color:#fff;font-weight:bold;-webkit-text-stroke:0;transform:scaleX(0.8214);">Nuancier</span>
<span class="t" style="left:84.5px;top:5.24px;font-size:8.9px;color:#a3a3a3;font-weight:bold;-webkit-text-stroke:0;transform:scaleX(0.8306);">Dégradé</span>
<span class="t" style="left:120.9px;top:5.24px;font-size:8.9px;color:#a3a3a3;font-weight:bold;-webkit-text-stroke:0;transform:scaleX(0.8760);">Motifs</span>
<svg class="i" style="left:169.5px;top:7.6px;" width="7.2" height="5.2" viewBox="0 0 7.2 5.2"><path d="M0 0.5H7.2M0 1.9H7.2M0 3.3H7.2M0 4.7H7.2" stroke="#9a9a9a" stroke-width="0.9"/></svg>
<div class="b" style="left:34.8px;top:0px;width:0.7px;height:20.5px;background:#3a3a3a;"></div>
<div class="b" style="left:77.5px;top:0px;width:0.7px;height:20.5px;background:#3a3a3a;"></div>
<div class="b" style="left:149.5px;top:0px;width:0.7px;height:20.5px;background:#3a3a3a;"></div>
<svg class="i" style="left:5.4px;top:32px;" width="8.6" height="8.6" viewBox="0 0 12 12"><circle cx="4.6" cy="4.6" r="3.2" fill="none" stroke="#e2e2e2" stroke-width="1.7"/><path d="M7.2 7.2L11 11" fill="none" stroke="#e2e2e2" stroke-width="2" /></svg>
<div class="b" style="left:17.4px;top:29.2px;width:156.8px;height:13.9px;background:#4a4a4a;border-radius:1px;"></div>
<span class="t" style="left:20px;top:31.59px;font-size:9.4px;color:#909090;transform:scaleX(0.8816);">Rechercher Nuancier</span>
<div class="b" style="left:5.9px;top:51.2px;width:12px;height:12.3px;background:#1c1c1c;"></div>
<div class="b" style="left:19.26px;top:51.2px;width:12px;height:12.3px;background:#000;"></div>
<div class="b" style="left:32.62px;top:51.2px;width:12px;height:12.3px;background:#d2d2d2;"></div>
<div class="b" style="left:45.98px;top:51.2px;width:12px;height:12.3px;background:#000;"></div>
<div class="b" style="left:59.34px;top:51.2px;width:12px;height:12.3px;background:#fff;"></div>
<div class="b" style="left:72.7px;top:51.2px;width:12px;height:12.3px;background:#575757;"></div>
<div class="b" style="left:86.06px;top:51.2px;width:12px;height:12.3px;background:#3c3c3c;"></div>
<div class="b" style="left:99.42px;top:51.2px;width:12px;height:12.3px;background:#686868;"></div>
<div class="b" style="left:112.78px;top:51.2px;width:12px;height:12.3px;background:#4a4a4a;"></div>
<div class="b" style="left:126.14px;top:51.2px;width:12px;height:12.3px;background:#999;"></div>
<div class="b" style="left:139.5px;top:51.2px;width:12px;height:12.3px;background:#3e3e3e;"></div>
<div class="b" style="left:152.86px;top:51.2px;width:12px;height:12.3px;background:#cfcfcf;"></div>
<div class="b" style="left:0px;top:70.7px;width:168px;height:191.3px;background:#464646;"></div>
<svg class="i" style="left:7px;top:79.4px;" width="2" height="4" viewBox="0 0 2 4"><path d="M0 0 L2 2 L0 4" fill="none" stroke="#a0a0a0" stroke-width="0.8"/></svg>
<svg class="i" style="left:14.75px;top:75.45px;" width="11.5" height="11.5" viewBox="0 0 12 12"><path d="M0.6 1.8H4.4L5.4 3H11.4V10.4H0.6Z" fill="#d6d6d6" /><path d="M0.6 4.2H11.4" fill="none" stroke="#9a9a9a" stroke-width="0.5" /></svg>
<span class="t" style="left:32.5px;top:76.7px;font-size:9.6px;color:#e8e8e8;transform:scaleX(0.7974);">RVB</span>
<svg class="i" style="left:7px;top:100.7px;" width="2" height="4" viewBox="0 0 2 4"><path d="M0 0 L2 2 L0 4" fill="none" stroke="#a0a0a0" stroke-width="0.8"/></svg>
<svg class="i" style="left:14.75px;top:96.75px;" width="11.5" height="11.5" viewBox="0 0 12 12"><path d="M0.6 1.8H4.4L5.4 3H11.4V10.4H0.6Z" fill="#d6d6d6" /><path d="M0.6 4.2H11.4" fill="none" stroke="#9a9a9a" stroke-width="0.5" /></svg>
<span class="t" style="left:32.5px;top:98px;font-size:9.6px;color:#e8e8e8;transform:scaleX(0.8478);">CMJN</span>
<svg class="i" style="left:7px;top:122.6px;" width="2" height="4" viewBox="0 0 2 4"><path d="M0 0 L2 2 L0 4" fill="none" stroke="#a0a0a0" stroke-width="0.8"/></svg>
<svg class="i" style="left:14.75px;top:118.65px;" width="11.5" height="11.5" viewBox="0 0 12 12"><path d="M0.6 1.8H4.4L5.4 3H11.4V10.4H0.6Z" fill="#d6d6d6" /><path d="M0.6 4.2H11.4" fill="none" stroke="#9a9a9a" stroke-width="0.5" /></svg>
<span class="t" style="left:32.5px;top:119.9px;font-size:9.6px;color:#e8e8e8;transform:scaleX(0.9225);">Niveaux de gris</span>
<svg class="i" style="left:7px;top:144px;" width="2" height="4" viewBox="0 0 2 4"><path d="M0 0 L2 2 L0 4" fill="none" stroke="#a0a0a0" stroke-width="0.8"/></svg>
<svg class="i" style="left:14.75px;top:140.05px;" width="11.5" height="11.5" viewBox="0 0 12 12"><path d="M0.6 1.8H4.4L5.4 3H11.4V10.4H0.6Z" fill="#d6d6d6" /><path d="M0.6 4.2H11.4" fill="none" stroke="#9a9a9a" stroke-width="0.5" /></svg>
<span class="t" style="left:32.5px;top:141.3px;font-size:9.6px;color:#e8e8e8;transform:scaleX(0.8811);">Pastel</span>
<svg class="i" style="left:7px;top:164.9px;" width="2" height="4" viewBox="0 0 2 4"><path d="M0 0 L2 2 L0 4" fill="none" stroke="#a0a0a0" stroke-width="0.8"/></svg>
<svg class="i" style="left:14.75px;top:160.95px;" width="11.5" height="11.5" viewBox="0 0 12 12"><path d="M0.6 1.8H4.4L5.4 3H11.4V10.4H0.6Z" fill="#d6d6d6" /><path d="M0.6 4.2H11.4" fill="none" stroke="#9a9a9a" stroke-width="0.5" /></svg>
<span class="t" style="left:32.5px;top:162.2px;font-size:9.6px;color:#e8e8e8;transform:scaleX(0.8978);">Claire</span>
<svg class="i" style="left:7px;top:186.5px;" width="2" height="4" viewBox="0 0 2 4"><path d="M0 0 L2 2 L0 4" fill="none" stroke="#a0a0a0" stroke-width="0.8"/></svg>
<svg class="i" style="left:14.75px;top:182.55px;" width="11.5" height="11.5" viewBox="0 0 12 12"><path d="M0.6 1.8H4.4L5.4 3H11.4V10.4H0.6Z" fill="#d6d6d6" /><path d="M0.6 4.2H11.4" fill="none" stroke="#9a9a9a" stroke-width="0.5" /></svg>
<span class="t" style="left:32.5px;top:183.8px;font-size:9.6px;color:#e8e8e8;transform:scaleX(0.8703);">Pur</span>
<svg class="i" style="left:7px;top:207.4px;" width="2" height="4" viewBox="0 0 2 4"><path d="M0 0 L2 2 L0 4" fill="none" stroke="#a0a0a0" stroke-width="0.8"/></svg>
<svg class="i" style="left:14.75px;top:203.45px;" width="11.5" height="11.5" viewBox="0 0 12 12"><path d="M0.6 1.8H4.4L5.4 3H11.4V10.4H0.6Z" fill="#d6d6d6" /><path d="M0.6 4.2H11.4" fill="none" stroke="#9a9a9a" stroke-width="0.5" /></svg>
<span class="t" style="left:32.5px;top:204.7px;font-size:9.6px;color:#e8e8e8;transform:scaleX(0.8750);">Foncée</span>
<svg class="i" style="left:7px;top:228.8px;" width="2" height="4" viewBox="0 0 2 4"><path d="M0 0 L2 2 L0 4" fill="none" stroke="#a0a0a0" stroke-width="0.8"/></svg>
<svg class="i" style="left:14.75px;top:224.85px;" width="11.5" height="11.5" viewBox="0 0 12 12"><path d="M0.6 1.8H4.4L5.4 3H11.4V10.4H0.6Z" fill="#d6d6d6" /><path d="M0.6 4.2H11.4" fill="none" stroke="#9a9a9a" stroke-width="0.5" /></svg>
<span class="t" style="left:32.5px;top:226.1px;font-size:9.6px;color:#e8e8e8;transform:scaleX(0.8926);">Plus foncé</span>
<svg class="i" style="left:7px;top:250.2px;" width="2" height="4" viewBox="0 0 2 4"><path d="M0 0 L2 2 L0 4" fill="none" stroke="#a0a0a0" stroke-width="0.8"/></svg>
<svg class="i" style="left:14.75px;top:246.25px;" width="11.5" height="11.5" viewBox="0 0 12 12"><path d="M0.6 1.8H4.4L5.4 3H11.4V10.4H0.6Z" fill="#d6d6d6" /><path d="M0.6 4.2H11.4" fill="none" stroke="#9a9a9a" stroke-width="0.5" /></svg>
<span class="t" style="left:32.5px;top:247.5px;font-size:9.6px;color:#e8e8e8;transform:scaleX(0.8488);">Pâle</span>
<div class="b" style="left:168px;top:70.7px;width:10.5px;height:220.5px;background:#4d4d4d;"></div>
<div class="b" style="left:171.1px;top:70.7px;width:7.4px;height:155px;background:#6b6b6b;"></div>
<svg class="i" style="left:172.5px;top:281px;" width="4.6" height="2.4" viewBox="0 0 4.6 2.4"><path d="M0 0L2.3 2.4L4.6 0" fill="none" stroke="#7e7e7e" stroke-width="0.8"/></svg>
<div class="b" style="left:1.3px;top:263.9px;width:20.1px;height:21px;background:#3fc7d0;"></div>
<div class="b" style="left:23.8px;top:263.9px;width:19.5px;height:21px;background:#4a9bd3;"></div>
<div class="b" style="left:45.9px;top:263.9px;width:20.1px;height:21px;background:#69b8ec;"></div>
<div class="b" style="left:67.9px;top:263.9px;width:20.3px;height:21px;background:#7b9b7c;"></div>
<div class="b" style="left:90px;top:263.9px;width:20.1px;height:21px;background:#a9d191;"></div>
<div class="b" style="left:112.2px;top:263.9px;width:20.1px;height:21px;background:#dcecc2;"></div>
<div class="b" style="left:134.7px;top:263.9px;width:20px;height:21px;background:#e9a962;"></div>
<div class="b" style="left:1.3px;top:286.2px;width:20.1px;height:3.8px;background:#f1d983;"></div>
<div class="b" style="left:0px;top:291.3px;width:178.5px;height:0.7px;background:#454545;"></div>
<svg class="i" style="left:107.45px;top:294.85px;" width="10.5" height="10.5" viewBox="0 0 12 12"><path d="M0.6 1.8H4.4L5.4 3H11.4V10.4H0.6Z" fill="#d6d6d6" /><path d="M0.6 4.2H11.4" fill="none" stroke="#9a9a9a" stroke-width="0.5" /></svg>
<svg class="i" style="left:129px;top:295.1px;" width="10" height="10" viewBox="0 0 12 12"><rect x="1" y="1" width="10" height="10" rx="0.8" fill="none" stroke="#e2e2e2" stroke-width="1.1"/><path d="M6 3.4V8.6M3.4 6H8.6" fill="none" stroke="#e2e2e2" stroke-width="1.1" /></svg>
<svg class="i" style="left:150.65px;top:294.85px;" width="10.5" height="10.5" viewBox="0 0 12 12"><path d="M2 3.4H10L9.4 11.4H2.6Z" fill="#808080" /><path d="M1.2 1.8H10.8V2.8H1.2ZM4.4 0.6H7.6V1.8H4.4Z" fill="#808080" /><path d="M4.4 4.6V10M6 4.6V10M7.6 4.6V10" fill="none" stroke="#535353" stroke-width="0.6" /></svg>
</div>
<div id="panel-proprietes" class="panel" style="left:1082.5px;top:366.5px;width:178.5px;height:307.5px;background:#535353;">
<div class="b" style="left:0px;top:0px;width:178.5px;height:20.5px;background:#424242;"></div>
<div class="b" style="left:0px;top:0px;width:48.3px;height:20.5px;background:#535353;"></div>
<span class="t" style="left:6.5px;top:5.24px;font-size:8.9px;color:#fff;font-weight:bold;-webkit-text-stroke:0;transform:scaleX(0.8063);">Propriétés</span>
<span class="t" style="left:54.5px;top:5.24px;font-size:8.9px;color:#a3a3a3;font-weight:bold;-webkit-text-stroke:0;transform:scaleX(0.7854);">Réglages</span>
<span class="t" style="left:98.1px;top:5.24px;font-size:8.9px;color:#a3a3a3;font-weight:bold;-webkit-text-stroke:0;transform:scaleX(0.8077);">Bibliothèques</span>
<svg class="i" style="left:170.1px;top:7.6px;" width="7.2" height="5.2" viewBox="0 0 7.2 5.2"><path d="M0 0.5H7.2M0 1.9H7.2M0 3.3H7.2M0 4.7H7.2" stroke="#9a9a9a" stroke-width="0.9"/></svg>
<div class="b" style="left:48.5px;top:0px;width:0.7px;height:20.5px;background:#3a3a3a;"></div>
<div class="b" style="left:91.5px;top:0px;width:0.7px;height:20.5px;background:#3a3a3a;"></div>
<div class="b" style="left:152.8px;top:0px;width:0.7px;height:20.5px;background:#3a3a3a;"></div>
<div class="b" style="left:8px;top:25.5px;width:16px;height:16px;background:#383838;"></div>
<span class="t" style="left:12.1px;top:28.17px;font-size:11.5px;color:#f4f4f4;font-family:'Liberation Serif',serif;">T</span>
<span class="t" style="left:28.5px;top:30.44px;font-size:8.7px;color:#d0d0d0;transform:scaleX(0.8364);">Calque de texte</span>
<div class="b" style="left:0px;top:45.5px;width:171px;height:0.8px;background:#454545;"></div>
<svg class="i" style="left:6.4px;top:55.1px;" width="2" height="4" viewBox="0 0 2 4"><path d="M0 0 L2 2 L0 4" fill="none" stroke="#a8a8a8" stroke-width="0.8"/></svg>
<span class="t" style="left:17.1px;top:52.69px;font-size:9px;color:#f2f2f2;font-weight:bold;-webkit-text-stroke:0;transform:scaleX(0.8807);">Transformation</span>
<div class="b" style="left:0px;top:69px;width:171px;height:0.8px;background:#454545;"></div>
<svg class="i" style="left:5.8px;top:78.7px;" width="4" height="2" viewBox="0 0 4 2"><path d="M0 0 L2 2 L4 0" fill="none" stroke="#a8a8a8" stroke-width="0.8"/></svg>
<span class="t" style="left:16.5px;top:75.09px;font-size:9px;color:#f2f2f2;font-weight:bold;-webkit-text-stroke:0;transform:scaleX(0.8668);">Caractère</span>
<div class="b" style="left:6.4px;top:92.9px;width:141.6px;height:10.3px;background:#454545;border-radius:1px;"></div>
<div class="b" style="left:138.7px;top:92.9px;width:0.7px;height:10.3px;background:#535353;"></div>
<span class="t" style="left:9.1px;top:93.84px;font-size:8.7px;color:#dcdcdc;transform:scaleX(0.7705);">Arial</span>
<svg class="i" style="left:141.3px;top:97.2px;" width="4.4" height="2.2" viewBox="0 0 4.4 2.2"><path d="M0 0 L2.2 2.2 L4.4 0" fill="none" stroke="#aaa" stroke-width="0.9"/></svg>
<div class="b" style="left:6.4px;top:111.1px;width:162.5px;height:10.8px;background:#454545;border-radius:1px;"></div>
<svg class="i" style="left:6.95px;top:131.55px;" width="12.5" height="12.5" viewBox="0 0 12 12"><text x="7.4" y="10.6" font-size="13" fill="#e2e2e2" font-family="Liberation Serif,serif" text-anchor="middle" >T</text><text x="2" y="10.8" font-size="7" fill="#e2e2e2" font-family="Liberation Serif,serif" text-anchor="middle" >T</text></svg>
<div class="b" style="left:24.5px;top:132.5px;width:44px;height:10.8px;background:#454545;border-radius:1px;"></div>
<div class="b" style="left:60.5px;top:132.5px;width:0.7px;height:10.8px;background:#535353;"></div>
<span class="t" style="left:26.5px;top:133.64px;font-size:8.7px;color:#dcdcdc;transform:scaleX(0.8842);">52,5 pt</span>
<svg class="i" style="left:62.9px;top:137px;" width="4.4" height="2.2" viewBox="0 0 4.4 2.2"><path d="M0 0 L2.2 2.2 L4.4 0" fill="none" stroke="#aaa" stroke-width="0.9"/></svg>
<svg class="i" style="left:131.55px;top:131.55px;" width="12.5" height="12.5" viewBox="0 0 12 12"><text x="7" y="5.2" font-size="6.4" fill="#e2e2e2" font-family="Liberation Sans,serif" text-anchor="middle" >A</text><text x="7" y="11.6" font-size="6.4" fill="#e2e2e2" font-family="Liberation Sans,serif" text-anchor="middle" >A</text><path d="M4.4 5.9H9.6M4.4 11.9H9.6" fill="none" stroke="#e2e2e2" stroke-width="0.6" /><path d="M1.6 3V11" fill="none" stroke="#e2e2e2" stroke-width="0.7" /><path d="M1.6 1.8L2.8 3.8H0.4Z M1.6 12L0.4 10H2.8Z" fill="#e2e2e2" /></svg>
<div class="b" style="left:149.5px;top:132.5px;width:19.4px;height:10.8px;background:#454545;border-radius:1px;"></div>
<svg class="i" style="left:6.7px;top:149.8px;" width="13" height="13" viewBox="0 0 12 12"><text x="2.6" y="8.6" font-size="9" fill="#e2e2e2" font-family="Liberation Sans,serif" text-anchor="middle" >V</text><text x="9" y="8.6" font-size="9" fill="#e2e2e2" font-family="Liberation Sans,serif" text-anchor="middle" >A</text><path d="M5.2 0.8L4.4 9.6" fill="none" stroke="#e2e2e2" stroke-width="0.6" /><path d="M6.4 11H11.4" fill="none" stroke="#e2e2e2" stroke-width="0.7" /><path d="M5.6 11L7.2 10V12Z" fill="#e2e2e2" /></svg>
<div class="b" style="left:24.5px;top:151.1px;width:44px;height:10.4px;background:#454545;border-radius:1px;"></div>
<div class="b" style="left:60.5px;top:151.1px;width:0.7px;height:10.4px;background:#535353;"></div>
<span class="t" style="left:26.5px;top:152.04px;font-size:8.7px;color:#dcdcdc;transform:scaleX(0.8133);">Métrique</span>
<svg class="i" style="left:62.9px;top:155.4px;" width="4.4" height="2.2" viewBox="0 0 4.4 2.2"><path d="M0 0 L2.2 2.2 L4.4 0" fill="none" stroke="#aaa" stroke-width="0.9"/></svg>
<svg class="i" style="left:131.2px;top:149.6px;" width="13.4" height="13.4" viewBox="0 0 12 12"><rect x="0.4" y="0.6" width="11.2" height="7.6" fill="#e2e2e2"/><text x="6" y="7.4" font-size="7.6" fill="#4a4a4a" font-family="Liberation Sans,serif" text-anchor="middle" font-weight="bold" textLength="10" lengthAdjust="spacingAndGlyphs">VA</text><path d="M1.4 10.6H10.6" fill="none" stroke="#e2e2e2" stroke-width="0.7" /><path d="M0.2 10.6L1.8 9.6V11.6Z M11.8 10.6L10.2 11.6V9.6Z" fill="#e2e2e2" /></svg>
<div class="b" style="left:149.5px;top:151.1px;width:19.4px;height:10.4px;background:#454545;border-radius:1px;"></div>
<span class="t" style="left:121.7px;top:168.74px;font-size:8.7px;color:#dcdcdc;transform:scaleX(0.8049);">Couleur</span>
<div class="b" style="left:150.5px;top:166.3px;width:19.2px;height:13px;background:#fff;"></div>
<div class="b" style="left:0px;top:206.9px;width:171px;height:0.8px;background:#454545;"></div>
<svg class="i" style="left:6px;top:217.4px;" width="4" height="2" viewBox="0 0 4 2"><path d="M0 0 L2 2 L4 0" fill="none" stroke="#a8a8a8" stroke-width="0.8"/></svg>
<span class="t" style="left:17px;top:214.29px;font-size:9px;color:#f2f2f2;font-weight:bold;-webkit-text-stroke:0;transform:scaleX(0.8722);">Paragraphe</span>
<div class="b" style="left:24.7px;top:231.1px;width:15.2px;height:15.5px;background:#333;border-radius:1px;"></div>
<svg class="i" style="left:9.5px;top:233.2px;" width="11" height="11" viewBox="0 0 12 12"><rect x="0" y="0.2" width="12" height="1.15" fill="#b4b4b4"/><rect x="0" y="1.7" width="8" height="1.15" fill="#b4b4b4"/><rect x="0" y="3.2" width="12" height="1.15" fill="#b4b4b4"/><rect x="0" y="4.7" width="7" height="1.15" fill="#b4b4b4"/><rect x="0" y="6.2" width="12" height="1.15" fill="#b4b4b4"/><rect x="0" y="7.7" width="9" height="1.15" fill="#b4b4b4"/><rect x="0" y="9.2" width="12" height="1.15" fill="#b4b4b4"/><rect x="0" y="10.7" width="8" height="1.15" fill="#b4b4b4"/></svg>
<svg class="i" style="left:26.7px;top:233.2px;" width="11" height="11" viewBox="0 0 12 12"><rect x="0.0" y="0.2" width="12" height="1.15" fill="#d8d8d8"/><rect x="2.0" y="1.7" width="8" height="1.15" fill="#d8d8d8"/><rect x="0.0" y="3.2" width="12" height="1.15" fill="#d8d8d8"/><rect x="2.5" y="4.7" width="7" height="1.15" fill="#d8d8d8"/><rect x="0.0" y="6.2" width="12" height="1.15" fill="#d8d8d8"/><rect x="1.5" y="7.7" width="9" height="1.15" fill="#d8d8d8"/><rect x="0.0" y="9.2" width="12" height="1.15" fill="#d8d8d8"/><rect x="2.0" y="10.7" width="8" height="1.15" fill="#d8d8d8"/></svg>
<svg class="i" style="left:44.3px;top:233.2px;" width="11" height="11" viewBox="0 0 12 12"><rect x="0" y="0.2" width="12" height="1.15" fill="#c4c4c4"/><rect x="4" y="1.7" width="8" height="1.15" fill="#c4c4c4"/><rect x="0" y="3.2" width="12" height="1.15" fill="#c4c4c4"/><rect x="5" y="4.7" width="7" height="1.15" fill="#c4c4c4"/><rect x="0" y="6.2" width="12" height="1.15" fill="#c4c4c4"/><rect x="3" y="7.7" width="9" height="1.15" fill="#c4c4c4"/><rect x="0" y="9.2" width="12" height="1.15" fill="#c4c4c4"/><rect x="4" y="10.7" width="8" height="1.15" fill="#c4c4c4"/></svg>
<svg class="i" style="left:95.4px;top:233.6px;" width="11" height="11" viewBox="0 0 12 12"><path d="M0.6 0.6H11.4V10H0.6Z" fill="#9c9c9c" /><path d="M0.6 10.6H6.6V11.6H0.6Z" fill="#7e7e7e" /></svg>
<svg class="i" style="left:113.2px;top:233.6px;" width="11" height="11" viewBox="0 0 12 12"><path d="M0.6 0.6H11.4V10H0.6Z" fill="#9c9c9c" /><path d="M0.6 10.6H6.6V11.6H0.6Z" fill="#7e7e7e" /></svg>
<svg class="i" style="left:131px;top:233.6px;" width="11" height="11" viewBox="0 0 12 12"><path d="M0.6 0.6H11.4V10H0.6Z" fill="#9c9c9c" /><path d="M0.6 10.6H6.6V11.6H0.6Z" fill="#7e7e7e" /></svg>
<div class="b" style="left:0px;top:274.1px;width:171px;height:0.8px;background:#454545;"></div>
<svg class="i" style="left:6px;top:283.8px;" width="4" height="2" viewBox="0 0 4 2"><path d="M0 0 L2 2 L4 0" fill="none" stroke="#a8a8a8" stroke-width="0.8"/></svg>
<span class="t" style="left:17.8px;top:280.19px;font-size:9px;color:#f2f2f2;font-weight:bold;-webkit-text-stroke:0;transform:scaleX(0.8608);">Options de texte</span>
<div class="b" style="left:171px;top:45.5px;width:7.5px;height:245px;background:#4d4d4d;"></div>
<svg class="i" style="left:172.5px;top:53.3px;" width="4.6" height="2.4" viewBox="0 0 4.6 2.4"><path d="M0 2.4L2.3 0L4.6 2.4" fill="none" stroke="#7e7e7e" stroke-width="0.8"/></svg>
<div class="b" style="left:171.5px;top:59px;width:7px;height:84.3px;background:#6b6b6b;"></div>
<svg class="i" style="left:172.5px;top:281.7px;" width="4.6" height="2.4" viewBox="0 0 4.6 2.4"><path d="M0 0L2.3 2.4L4.6 0" fill="none" stroke="#7e7e7e" stroke-width="0.8"/></svg>
</div>
</body></html>
